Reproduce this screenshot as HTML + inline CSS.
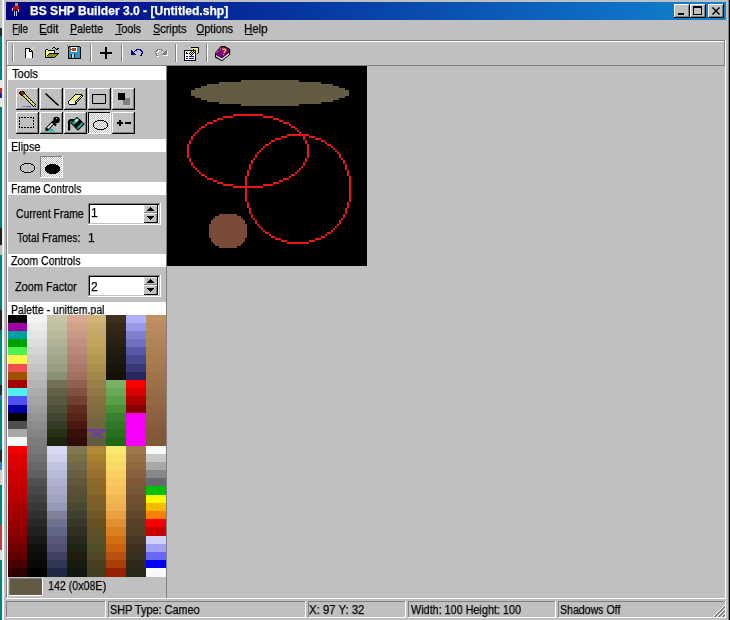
<!DOCTYPE html><html><head><meta charset="utf-8"><style>
html,body{margin:0;padding:0;}
body{width:730px;height:620px;position:relative;overflow:hidden;background:#c0c0c0;font-family:"Liberation Sans",sans-serif;}
.a{position:absolute;}
.t{position:absolute;white-space:pre;line-height:16px;-webkit-font-smoothing:antialiased;will-change:transform;-webkit-text-stroke:0.25px currentColor;font-family:"Liberation Sans",sans-serif;}
u{text-decoration:none;border-bottom:1px solid #000;}
</style></head><body>
<div class="a" style="left:0px;top:0px;width:2px;height:28px;background:#c8c0c0;"></div>
<div class="a" style="left:0px;top:28px;width:2px;height:8px;background:#203030;"></div>
<div class="a" style="left:0px;top:36px;width:2px;height:44px;background:#008080;"></div>
<div class="a" style="left:0px;top:80px;width:2px;height:8px;background:#e8e8e8;"></div>
<div class="a" style="left:0px;top:88px;width:2px;height:5px;background:#d02020;"></div>
<div class="a" style="left:0px;top:93px;width:2px;height:5px;background:#2020c0;"></div>
<div class="a" style="left:0px;top:98px;width:2px;height:9px;background:#e8e8e8;"></div>
<div class="a" style="left:0px;top:107px;width:2px;height:121px;background:#008080;"></div>
<div class="a" style="left:0px;top:228px;width:2px;height:17px;background:#202020;"></div>
<div class="a" style="left:0px;top:245px;width:2px;height:10px;background:#c0c0c0;"></div>
<div class="a" style="left:0px;top:255px;width:2px;height:55px;background:#008080;"></div>
<div class="a" style="left:0px;top:310px;width:2px;height:20px;background:#302020;"></div>
<div class="a" style="left:0px;top:330px;width:2px;height:55px;background:#008080;"></div>
<div class="a" style="left:0px;top:385px;width:2px;height:10px;background:#203030;"></div>
<div class="a" style="left:0px;top:395px;width:2px;height:5px;background:#3070d0;"></div>
<div class="a" style="left:0px;top:400px;width:2px;height:50px;background:#008080;"></div>
<div class="a" style="left:0px;top:450px;width:2px;height:12px;background:#203030;"></div>
<div class="a" style="left:0px;top:462px;width:2px;height:8px;background:#3080d0;"></div>
<div class="a" style="left:0px;top:470px;width:2px;height:15px;background:#d0d0d0;"></div>
<div class="a" style="left:0px;top:485px;width:2px;height:40px;background:#008080;"></div>
<div class="a" style="left:0px;top:525px;width:2px;height:25px;background:#c04040;"></div>
<div class="a" style="left:0px;top:550px;width:2px;height:10px;background:#e0e0e0;"></div>
<div class="a" style="left:0px;top:560px;width:2px;height:60px;background:#008080;"></div>
<div class="a" style="left:2px;top:0px;width:1px;height:620px;background:#e0ecec;"></div>
<div class="a" style="left:3px;top:0px;width:1px;height:620px;background:#fff;"></div>
<div class="a" style="left:727px;top:0px;width:1px;height:620px;background:#c0c0c0;"></div>
<div class="a" style="left:728px;top:0px;width:1px;height:620px;background:#808080;"></div>
<div class="a" style="left:729px;top:0px;width:1px;height:620px;background:#000;"></div>
<div class="a" style="left:6px;top:2px;width:720px;height:18px;background:linear-gradient(to right,#000080,#1084d0);"></div>
<div class="a" style="left:15px;top:3px;width:3px;height:3px;background:#e08030;"></div>
<div class="a" style="left:13px;top:6px;width:6px;height:4px;background:#b01010;"></div>
<div class="a" style="left:12px;top:8px;width:1px;height:3px;background:#f0b0b0;"></div>
<div class="a" style="left:18px;top:9px;width:1px;height:3px;background:#f0b0b0;"></div>
<div class="a" style="left:14px;top:11px;width:1px;height:5px;background:#c0c8f0;"></div>
<div class="a" style="left:16px;top:11px;width:1px;height:5px;background:#c0c8f0;"></div>
<div class="t" style="left:30px;top:3px;font-size:12px;font-weight:700;color:#fff;transform:scaleX(1.0052);transform-origin:0 0;">BS SHP Builder 3.0 - [Untitled.shp]</div>
<div class="a" style="left:674px;top:4px;width:16px;height:14px;background:#000;"></div>
<div class="a" style="left:674px;top:4px;width:15px;height:13px;background:#fff;"></div>
<div class="a" style="left:675px;top:5px;width:14px;height:12px;background:#808080;"></div>
<div class="a" style="left:675px;top:5px;width:13px;height:11px;background:#c0c0c0;"></div>
<div class="a" style="left:690px;top:4px;width:16px;height:14px;background:#000;"></div>
<div class="a" style="left:690px;top:4px;width:15px;height:13px;background:#fff;"></div>
<div class="a" style="left:691px;top:5px;width:14px;height:12px;background:#808080;"></div>
<div class="a" style="left:691px;top:5px;width:13px;height:11px;background:#c0c0c0;"></div>
<div class="a" style="left:708px;top:4px;width:16px;height:14px;background:#000;"></div>
<div class="a" style="left:708px;top:4px;width:15px;height:13px;background:#fff;"></div>
<div class="a" style="left:709px;top:5px;width:14px;height:12px;background:#808080;"></div>
<div class="a" style="left:709px;top:5px;width:13px;height:11px;background:#c0c0c0;"></div>
<div class="a" style="left:678px;top:13px;width:6px;height:2px;background:#000;"></div>
<div class="a" style="left:693px;top:6px;width:9px;height:9px;background:#000;"></div>
<div class="a" style="left:694px;top:8px;width:7px;height:6px;background:#c0c0c0;"></div>
<svg class="a" style="left:708px;top:4px" width="16" height="14"><path d="M4.5 3.5L11.5 10.5M11.5 3.5L4.5 10.5" stroke="#000" stroke-width="1.6"/></svg>
<div class="t" style="left:12px;top:21px;font-size:12px;font-weight:400;color:#000;transform:scaleX(0.8235);transform-origin:0 0;">File</div>
<div class="t" style="left:39px;top:21px;font-size:12px;font-weight:400;color:#000;transform:scaleX(0.9444);transform-origin:0 0;">Edit</div>
<div class="t" style="left:70px;top:21px;font-size:12px;font-weight:400;color:#000;transform:scaleX(0.8857);transform-origin:0 0;">Palette</div>
<div class="t" style="left:116px;top:21px;font-size:12px;font-weight:400;color:#000;transform:scaleX(0.8889);transform-origin:0 0;">Tools</div>
<div class="t" style="left:153px;top:21px;font-size:12px;font-weight:400;color:#000;transform:scaleX(0.9118);transform-origin:0 0;">Scripts</div>
<div class="t" style="left:196px;top:21px;font-size:12px;font-weight:400;color:#000;transform:scaleX(0.8974);transform-origin:0 0;">Options</div>
<div class="t" style="left:244px;top:21px;font-size:12px;font-weight:400;color:#000;transform:scaleX(0.9545);transform-origin:0 0;">Help</div>
<div class="a" style="left:13px;top:34px;width:6px;height:1px;background:#000;"></div>
<div class="a" style="left:40px;top:34px;width:7px;height:1px;background:#000;"></div>
<div class="a" style="left:70px;top:34px;width:7px;height:1px;background:#000;"></div>
<div class="a" style="left:115px;top:34px;width:7px;height:1px;background:#000;"></div>
<div class="a" style="left:153px;top:34px;width:7px;height:1px;background:#000;"></div>
<div class="a" style="left:197px;top:34px;width:7px;height:1px;background:#000;"></div>
<div class="a" style="left:245px;top:34px;width:8px;height:1px;background:#000;"></div>
<div class="a" style="left:6px;top:40px;width:720px;height:1px;background:#808080;"></div>
<div class="a" style="left:6px;top:40px;width:1px;height:559px;background:#808080;"></div>
<div class="a" style="left:6px;top:598px;width:720px;height:1px;background:#fff;"></div>
<div class="a" style="left:725px;top:40px;width:1px;height:559px;background:#fff;"></div>
<div class="a" style="left:7px;top:41px;width:718px;height:1px;background:#fff;"></div>
<div class="a" style="left:7px;top:41px;width:1px;height:25px;background:#fff;"></div>
<div class="a" style="left:7px;top:65px;width:718px;height:1px;background:#808080;"></div>
<div class="a" style="left:724px;top:41px;width:1px;height:25px;background:#808080;"></div>
<div class="a" style="left:12px;top:44px;width:1px;height:18px;background:#808080;"></div>
<div class="a" style="left:13px;top:44px;width:1px;height:18px;background:#fff;"></div>
<div class="a" style="left:90px;top:44px;width:1px;height:18px;background:#808080;"></div>
<div class="a" style="left:91px;top:44px;width:1px;height:18px;background:#fff;"></div>
<div class="a" style="left:121px;top:44px;width:1px;height:18px;background:#808080;"></div>
<div class="a" style="left:122px;top:44px;width:1px;height:18px;background:#fff;"></div>
<div class="a" style="left:175px;top:44px;width:1px;height:18px;background:#808080;"></div>
<div class="a" style="left:176px;top:44px;width:1px;height:18px;background:#fff;"></div>
<div class="a" style="left:206px;top:44px;width:1px;height:18px;background:#808080;"></div>
<div class="a" style="left:207px;top:44px;width:1px;height:18px;background:#fff;"></div>
<svg class="a" style="left:20px;top:44px" width="20" height="18" shape-rendering="crispEdges">
<g fill="#e8e880" opacity="0.6"><rect x="4" y="9" width="1" height="2"/><rect x="9" y="14" width="2" height="1"/><rect x="12" y="3" width="2" height="2"/><rect x="14" y="8" width="1" height="1"/><rect x="3" y="14" width="1" height="1"/></g>
<path d="M5 4h5v1h1v1h1v1h1v7h-8z" fill="#000"/>
<path d="M6 5h3v3h3v6h-6z" fill="#fff"/>
<rect x="10" y="6" width="1" height="1" fill="#fff"/>
</svg>
<svg class="a" style="left:43px;top:44px" width="18" height="16" shape-rendering="crispEdges"><rect x="3" y="6" width="1" height="1" fill="#ffff80"/><rect x="3" y="7" width="1" height="1" fill="#ffff80"/><rect x="3" y="8" width="1" height="1" fill="#ffff80"/><rect x="3" y="9" width="1" height="1" fill="#ffff80"/><rect x="3" y="10" width="1" height="1" fill="#ffff80"/><rect x="3" y="11" width="1" height="1" fill="#ffff80"/><rect x="3" y="12" width="1" height="1" fill="#ffff80"/><rect x="4" y="6" width="1" height="1" fill="#ffff80"/><rect x="4" y="7" width="1" height="1" fill="#ffff80"/><rect x="4" y="8" width="1" height="1" fill="#ffff80"/><rect x="4" y="9" width="1" height="1" fill="#ffff80"/><rect x="4" y="10" width="1" height="1" fill="#ffff80"/><rect x="4" y="11" width="1" height="1" fill="#ffff80"/><rect x="4" y="12" width="1" height="1" fill="#ffff80"/><rect x="5" y="6" width="1" height="1" fill="#ffff80"/><rect x="5" y="7" width="1" height="1" fill="#ffff80"/><rect x="5" y="8" width="1" height="1" fill="#ffff80"/><rect x="5" y="9" width="1" height="1" fill="#ffff80"/><rect x="5" y="10" width="1" height="1" fill="#ffff80"/><rect x="5" y="11" width="1" height="1" fill="#ffff80"/><rect x="5" y="12" width="1" height="1" fill="#ffff80"/><rect x="6" y="6" width="1" height="1" fill="#ffff80"/><rect x="6" y="7" width="1" height="1" fill="#ffff80"/><rect x="6" y="8" width="1" height="1" fill="#ffff80"/><rect x="6" y="9" width="1" height="1" fill="#ffff80"/><rect x="6" y="10" width="1" height="1" fill="#ffff80"/><rect x="6" y="11" width="1" height="1" fill="#ffff80"/><rect x="6" y="12" width="1" height="1" fill="#ffff80"/><rect x="7" y="6" width="1" height="1" fill="#ffff80"/><rect x="7" y="7" width="1" height="1" fill="#ffff80"/><rect x="7" y="8" width="1" height="1" fill="#ffff80"/><rect x="7" y="9" width="1" height="1" fill="#ffff80"/><rect x="7" y="10" width="1" height="1" fill="#ffff80"/><rect x="7" y="11" width="1" height="1" fill="#ffff80"/><rect x="7" y="12" width="1" height="1" fill="#ffff80"/><rect x="8" y="6" width="1" height="1" fill="#ffff80"/><rect x="8" y="7" width="1" height="1" fill="#ffff80"/><rect x="8" y="8" width="1" height="1" fill="#ffff80"/><rect x="8" y="9" width="1" height="1" fill="#ffff80"/><rect x="8" y="10" width="1" height="1" fill="#ffff80"/><rect x="8" y="11" width="1" height="1" fill="#ffff80"/><rect x="8" y="12" width="1" height="1" fill="#ffff80"/><rect x="9" y="6" width="1" height="1" fill="#ffff80"/><rect x="9" y="7" width="1" height="1" fill="#ffff80"/><rect x="9" y="8" width="1" height="1" fill="#ffff80"/><rect x="9" y="9" width="1" height="1" fill="#ffff80"/><rect x="9" y="10" width="1" height="1" fill="#ffff80"/><rect x="9" y="11" width="1" height="1" fill="#ffff80"/><rect x="9" y="12" width="1" height="1" fill="#ffff80"/><rect x="10" y="6" width="1" height="1" fill="#ffff80"/><rect x="10" y="7" width="1" height="1" fill="#ffff80"/><rect x="10" y="8" width="1" height="1" fill="#ffff80"/><rect x="10" y="9" width="1" height="1" fill="#ffff80"/><rect x="10" y="10" width="1" height="1" fill="#ffff80"/><rect x="10" y="11" width="1" height="1" fill="#ffff80"/><rect x="10" y="12" width="1" height="1" fill="#ffff80"/><rect x="6" y="10" width="1" height="1" fill="#909010"/><rect x="7" y="10" width="1" height="1" fill="#909010"/><rect x="8" y="10" width="1" height="1" fill="#909010"/><rect x="9" y="10" width="1" height="1" fill="#909010"/><rect x="10" y="10" width="1" height="1" fill="#909010"/><rect x="11" y="10" width="1" height="1" fill="#909010"/><rect x="12" y="10" width="1" height="1" fill="#909010"/><rect x="13" y="10" width="1" height="1" fill="#909010"/><rect x="14" y="10" width="1" height="1" fill="#909010"/><rect x="5" y="11" width="1" height="1" fill="#909010"/><rect x="6" y="11" width="1" height="1" fill="#909010"/><rect x="7" y="11" width="1" height="1" fill="#909010"/><rect x="8" y="11" width="1" height="1" fill="#909010"/><rect x="9" y="11" width="1" height="1" fill="#909010"/><rect x="10" y="11" width="1" height="1" fill="#909010"/><rect x="11" y="11" width="1" height="1" fill="#909010"/><rect x="12" y="11" width="1" height="1" fill="#909010"/><rect x="13" y="11" width="1" height="1" fill="#909010"/><rect x="4" y="12" width="1" height="1" fill="#909010"/><rect x="5" y="12" width="1" height="1" fill="#909010"/><rect x="6" y="12" width="1" height="1" fill="#909010"/><rect x="7" y="12" width="1" height="1" fill="#909010"/><rect x="8" y="12" width="1" height="1" fill="#909010"/><rect x="9" y="12" width="1" height="1" fill="#909010"/><rect x="10" y="12" width="1" height="1" fill="#909010"/><rect x="11" y="12" width="1" height="1" fill="#909010"/><rect x="12" y="12" width="1" height="1" fill="#909010"/><rect x="2" y="6" width="1" height="1" fill="#000"/><rect x="2" y="7" width="1" height="1" fill="#000"/><rect x="2" y="8" width="1" height="1" fill="#000"/><rect x="2" y="9" width="1" height="1" fill="#000"/><rect x="2" y="10" width="1" height="1" fill="#000"/><rect x="2" y="11" width="1" height="1" fill="#000"/><rect x="2" y="12" width="1" height="1" fill="#000"/><rect x="2" y="13" width="1" height="1" fill="#000"/><rect x="3" y="5" width="1" height="1" fill="#000"/><rect x="4" y="5" width="1" height="1" fill="#000"/><rect x="5" y="6" width="1" height="1" fill="#000"/><rect x="6" y="6" width="1" height="1" fill="#000"/><rect x="7" y="6" width="1" height="1" fill="#000"/><rect x="8" y="6" width="1" height="1" fill="#000"/><rect x="9" y="6" width="1" height="1" fill="#000"/><rect x="10" y="6" width="1" height="1" fill="#000"/><rect x="11" y="6" width="1" height="1" fill="#000"/><rect x="11" y="6" width="1" height="1" fill="#000"/><rect x="11" y="7" width="1" height="1" fill="#000"/><rect x="11" y="8" width="1" height="1" fill="#000"/><rect x="11" y="9" width="1" height="1" fill="#000"/><rect x="2" y="13" width="1" height="1" fill="#000"/><rect x="3" y="13" width="1" height="1" fill="#000"/><rect x="4" y="13" width="1" height="1" fill="#000"/><rect x="5" y="13" width="1" height="1" fill="#000"/><rect x="6" y="13" width="1" height="1" fill="#000"/><rect x="7" y="13" width="1" height="1" fill="#000"/><rect x="8" y="13" width="1" height="1" fill="#000"/><rect x="9" y="13" width="1" height="1" fill="#000"/><rect x="10" y="13" width="1" height="1" fill="#000"/><rect x="11" y="13" width="1" height="1" fill="#000"/><rect x="6" y="9" width="1" height="1" fill="#000"/><rect x="7" y="9" width="1" height="1" fill="#000"/><rect x="8" y="9" width="1" height="1" fill="#000"/><rect x="9" y="9" width="1" height="1" fill="#000"/><rect x="10" y="9" width="1" height="1" fill="#000"/><rect x="11" y="9" width="1" height="1" fill="#000"/><rect x="12" y="9" width="1" height="1" fill="#000"/><rect x="13" y="9" width="1" height="1" fill="#000"/><rect x="14" y="9" width="1" height="1" fill="#000"/><rect x="15" y="9" width="1" height="1" fill="#000"/><rect x="5" y="10" width="1" height="1" fill="#000"/><rect x="4" y="11" width="1" height="1" fill="#000"/><rect x="15" y="9" width="1" height="1" fill="#000"/><rect x="14" y="10" width="1" height="1" fill="#000"/><rect x="13" y="11" width="1" height="1" fill="#000"/><rect x="12" y="12" width="1" height="1" fill="#000"/><rect x="9" y="4" width="1" height="1" fill="#000"/><rect x="10" y="3" width="1" height="1" fill="#000"/><rect x="11" y="3" width="1" height="1" fill="#000"/><rect x="12" y="4" width="1" height="1" fill="#000"/><rect x="13" y="5" width="1" height="1" fill="#000"/><rect x="14" y="5" width="1" height="1" fill="#000"/><rect x="15" y="4" width="1" height="1" fill="#000"/><rect x="14" y="4" width="1" height="1" fill="#000"/></svg>
<svg class="a" style="left:66px;top:44px" width="16" height="16" shape-rendering="crispEdges">
<path d="M2 2h12v1h1v12h-13z" fill="#000"/>
<rect x="3" y="3" width="11" height="11" fill="#2898c8"/>
<rect x="5" y="3" width="6" height="5" fill="#fff"/>
<rect x="6" y="4" width="4" height="3" fill="#c04010"/>
<rect x="5" y="10" width="1" height="4" fill="#000"/><rect x="8" y="10" width="1" height="4" fill="#000"/>
<rect x="6" y="10" width="2" height="4" fill="#b8d8e4"/>
<path d="M1 1h1v1h1v1h1v1h1v1h1v1h-1v-1h-1v-1h-1v-1h-1v-1h-1z" fill="#a04030"/>
</svg>
<div class="a" style="left:100px;top:52px;width:12px;height:2px;background:#000;"></div>
<div class="a" style="left:105px;top:47px;width:2px;height:12px;background:#000;"></div>
<svg class="a" style="left:0;top:0" width="730" height="620" shape-rendering="crispEdges"><rect x="131" y="50" width="1" height="1" fill="#000080"/><rect x="131" y="51" width="1" height="1" fill="#000080"/><rect x="132" y="51" width="1" height="1" fill="#000080"/><rect x="131" y="52" width="1" height="1" fill="#000080"/><rect x="132" y="52" width="1" height="1" fill="#000080"/><rect x="133" y="52" width="1" height="1" fill="#000080"/><rect x="131" y="53" width="1" height="1" fill="#000080"/><rect x="132" y="53" width="1" height="1" fill="#000080"/><rect x="133" y="53" width="1" height="1" fill="#000080"/><rect x="134" y="53" width="1" height="1" fill="#000080"/><rect x="131" y="54" width="1" height="1" fill="#000080"/><rect x="132" y="54" width="1" height="1" fill="#000080"/><rect x="133" y="54" width="1" height="1" fill="#000080"/><rect x="134" y="54" width="1" height="1" fill="#000080"/><rect x="135" y="54" width="1" height="1" fill="#000080"/><rect x="134" y="51" width="1" height="1" fill="#000080"/><rect x="135" y="50" width="1" height="1" fill="#000080"/><rect x="136" y="50" width="1" height="1" fill="#000080"/><rect x="136" y="49" width="1" height="1" fill="#000080"/><rect x="137" y="49" width="1" height="1" fill="#000080"/><rect x="138" y="49" width="1" height="1" fill="#000080"/><rect x="139" y="49" width="1" height="1" fill="#000080"/><rect x="140" y="49" width="1" height="1" fill="#000080"/><rect x="140" y="50" width="1" height="1" fill="#000080"/><rect x="141" y="50" width="1" height="1" fill="#000080"/><rect x="141" y="51" width="1" height="1" fill="#000080"/><rect x="142" y="51" width="1" height="1" fill="#000080"/><rect x="142" y="52" width="1" height="1" fill="#000080"/><rect x="142" y="53" width="1" height="1" fill="#000080"/><rect x="141" y="53" width="1" height="1" fill="#000080"/><rect x="141" y="54" width="1" height="1" fill="#000080"/><rect x="140" y="55" width="1" height="1" fill="#000080"/><rect x="141" y="55" width="1" height="1" fill="#000080"/></svg>
<svg class="a" style="left:0;top:0" width="730" height="620" shape-rendering="crispEdges"><rect x="167" y="51" width="1" height="1" fill="#fff"/><rect x="167" y="52" width="1" height="1" fill="#fff"/><rect x="166" y="52" width="1" height="1" fill="#fff"/><rect x="167" y="53" width="1" height="1" fill="#fff"/><rect x="166" y="53" width="1" height="1" fill="#fff"/><rect x="165" y="53" width="1" height="1" fill="#fff"/><rect x="167" y="54" width="1" height="1" fill="#fff"/><rect x="166" y="54" width="1" height="1" fill="#fff"/><rect x="165" y="54" width="1" height="1" fill="#fff"/><rect x="164" y="54" width="1" height="1" fill="#fff"/><rect x="167" y="55" width="1" height="1" fill="#fff"/><rect x="166" y="55" width="1" height="1" fill="#fff"/><rect x="165" y="55" width="1" height="1" fill="#fff"/><rect x="164" y="55" width="1" height="1" fill="#fff"/><rect x="163" y="55" width="1" height="1" fill="#fff"/><rect x="164" y="52" width="1" height="1" fill="#fff"/><rect x="163" y="51" width="1" height="1" fill="#fff"/><rect x="162" y="51" width="1" height="1" fill="#fff"/><rect x="162" y="50" width="1" height="1" fill="#fff"/><rect x="161" y="50" width="1" height="1" fill="#fff"/><rect x="160" y="50" width="1" height="1" fill="#fff"/><rect x="159" y="50" width="1" height="1" fill="#fff"/><rect x="158" y="50" width="1" height="1" fill="#fff"/><rect x="158" y="51" width="1" height="1" fill="#fff"/><rect x="157" y="51" width="1" height="1" fill="#fff"/><rect x="157" y="52" width="1" height="1" fill="#fff"/><rect x="156" y="52" width="1" height="1" fill="#fff"/><rect x="156" y="53" width="1" height="1" fill="#fff"/><rect x="156" y="54" width="1" height="1" fill="#fff"/><rect x="157" y="54" width="1" height="1" fill="#fff"/><rect x="157" y="55" width="1" height="1" fill="#fff"/><rect x="158" y="56" width="1" height="1" fill="#fff"/><rect x="157" y="56" width="1" height="1" fill="#fff"/><rect x="166" y="50" width="1" height="1" fill="#808080"/><rect x="166" y="51" width="1" height="1" fill="#808080"/><rect x="165" y="51" width="1" height="1" fill="#808080"/><rect x="166" y="52" width="1" height="1" fill="#808080"/><rect x="165" y="52" width="1" height="1" fill="#808080"/><rect x="164" y="52" width="1" height="1" fill="#808080"/><rect x="166" y="53" width="1" height="1" fill="#808080"/><rect x="165" y="53" width="1" height="1" fill="#808080"/><rect x="164" y="53" width="1" height="1" fill="#808080"/><rect x="163" y="53" width="1" height="1" fill="#808080"/><rect x="166" y="54" width="1" height="1" fill="#808080"/><rect x="165" y="54" width="1" height="1" fill="#808080"/><rect x="164" y="54" width="1" height="1" fill="#808080"/><rect x="163" y="54" width="1" height="1" fill="#808080"/><rect x="162" y="54" width="1" height="1" fill="#808080"/><rect x="163" y="51" width="1" height="1" fill="#808080"/><rect x="162" y="50" width="1" height="1" fill="#808080"/><rect x="161" y="50" width="1" height="1" fill="#808080"/><rect x="161" y="49" width="1" height="1" fill="#808080"/><rect x="160" y="49" width="1" height="1" fill="#808080"/><rect x="159" y="49" width="1" height="1" fill="#808080"/><rect x="158" y="49" width="1" height="1" fill="#808080"/><rect x="157" y="49" width="1" height="1" fill="#808080"/><rect x="157" y="50" width="1" height="1" fill="#808080"/><rect x="156" y="50" width="1" height="1" fill="#808080"/><rect x="156" y="51" width="1" height="1" fill="#808080"/><rect x="155" y="51" width="1" height="1" fill="#808080"/><rect x="155" y="52" width="1" height="1" fill="#808080"/><rect x="155" y="53" width="1" height="1" fill="#808080"/><rect x="156" y="53" width="1" height="1" fill="#808080"/><rect x="156" y="54" width="1" height="1" fill="#808080"/><rect x="157" y="55" width="1" height="1" fill="#808080"/><rect x="156" y="55" width="1" height="1" fill="#808080"/></svg>
<svg class="a" style="left:180px;top:44px" width="20" height="18" shape-rendering="crispEdges"><rect x="5" y="7" width="1" height="1" fill="#fff"/><rect x="5" y="8" width="1" height="1" fill="#fff"/><rect x="5" y="9" width="1" height="1" fill="#fff"/><rect x="5" y="10" width="1" height="1" fill="#fff"/><rect x="5" y="11" width="1" height="1" fill="#fff"/><rect x="5" y="12" width="1" height="1" fill="#fff"/><rect x="5" y="13" width="1" height="1" fill="#fff"/><rect x="5" y="14" width="1" height="1" fill="#fff"/><rect x="5" y="15" width="1" height="1" fill="#fff"/><rect x="6" y="7" width="1" height="1" fill="#fff"/><rect x="6" y="8" width="1" height="1" fill="#fff"/><rect x="6" y="9" width="1" height="1" fill="#fff"/><rect x="6" y="10" width="1" height="1" fill="#fff"/><rect x="6" y="11" width="1" height="1" fill="#fff"/><rect x="6" y="12" width="1" height="1" fill="#fff"/><rect x="6" y="13" width="1" height="1" fill="#fff"/><rect x="6" y="14" width="1" height="1" fill="#fff"/><rect x="6" y="15" width="1" height="1" fill="#fff"/><rect x="7" y="7" width="1" height="1" fill="#fff"/><rect x="7" y="8" width="1" height="1" fill="#fff"/><rect x="7" y="9" width="1" height="1" fill="#fff"/><rect x="7" y="10" width="1" height="1" fill="#fff"/><rect x="7" y="11" width="1" height="1" fill="#fff"/><rect x="7" y="12" width="1" height="1" fill="#fff"/><rect x="7" y="13" width="1" height="1" fill="#fff"/><rect x="7" y="14" width="1" height="1" fill="#fff"/><rect x="7" y="15" width="1" height="1" fill="#fff"/><rect x="8" y="7" width="1" height="1" fill="#fff"/><rect x="8" y="8" width="1" height="1" fill="#fff"/><rect x="8" y="9" width="1" height="1" fill="#fff"/><rect x="8" y="10" width="1" height="1" fill="#fff"/><rect x="8" y="11" width="1" height="1" fill="#fff"/><rect x="8" y="12" width="1" height="1" fill="#fff"/><rect x="8" y="13" width="1" height="1" fill="#fff"/><rect x="8" y="14" width="1" height="1" fill="#fff"/><rect x="8" y="15" width="1" height="1" fill="#fff"/><rect x="9" y="7" width="1" height="1" fill="#fff"/><rect x="9" y="8" width="1" height="1" fill="#fff"/><rect x="9" y="9" width="1" height="1" fill="#fff"/><rect x="9" y="10" width="1" height="1" fill="#fff"/><rect x="9" y="11" width="1" height="1" fill="#fff"/><rect x="9" y="12" width="1" height="1" fill="#fff"/><rect x="9" y="13" width="1" height="1" fill="#fff"/><rect x="9" y="14" width="1" height="1" fill="#fff"/><rect x="9" y="15" width="1" height="1" fill="#fff"/><rect x="10" y="7" width="1" height="1" fill="#fff"/><rect x="10" y="8" width="1" height="1" fill="#fff"/><rect x="10" y="9" width="1" height="1" fill="#fff"/><rect x="10" y="10" width="1" height="1" fill="#fff"/><rect x="10" y="11" width="1" height="1" fill="#fff"/><rect x="10" y="12" width="1" height="1" fill="#fff"/><rect x="10" y="13" width="1" height="1" fill="#fff"/><rect x="10" y="14" width="1" height="1" fill="#fff"/><rect x="10" y="15" width="1" height="1" fill="#fff"/><rect x="11" y="7" width="1" height="1" fill="#fff"/><rect x="11" y="8" width="1" height="1" fill="#fff"/><rect x="11" y="9" width="1" height="1" fill="#fff"/><rect x="11" y="10" width="1" height="1" fill="#fff"/><rect x="11" y="11" width="1" height="1" fill="#fff"/><rect x="11" y="12" width="1" height="1" fill="#fff"/><rect x="11" y="13" width="1" height="1" fill="#fff"/><rect x="11" y="14" width="1" height="1" fill="#fff"/><rect x="11" y="15" width="1" height="1" fill="#fff"/><rect x="12" y="7" width="1" height="1" fill="#fff"/><rect x="12" y="8" width="1" height="1" fill="#fff"/><rect x="12" y="9" width="1" height="1" fill="#fff"/><rect x="12" y="10" width="1" height="1" fill="#fff"/><rect x="12" y="11" width="1" height="1" fill="#fff"/><rect x="12" y="12" width="1" height="1" fill="#fff"/><rect x="12" y="13" width="1" height="1" fill="#fff"/><rect x="12" y="14" width="1" height="1" fill="#fff"/><rect x="12" y="15" width="1" height="1" fill="#fff"/><rect x="13" y="7" width="1" height="1" fill="#fff"/><rect x="13" y="8" width="1" height="1" fill="#fff"/><rect x="13" y="9" width="1" height="1" fill="#fff"/><rect x="13" y="10" width="1" height="1" fill="#fff"/><rect x="13" y="11" width="1" height="1" fill="#fff"/><rect x="13" y="12" width="1" height="1" fill="#fff"/><rect x="13" y="13" width="1" height="1" fill="#fff"/><rect x="13" y="14" width="1" height="1" fill="#fff"/><rect x="13" y="15" width="1" height="1" fill="#fff"/><rect x="14" y="7" width="1" height="1" fill="#fff"/><rect x="14" y="8" width="1" height="1" fill="#fff"/><rect x="14" y="9" width="1" height="1" fill="#fff"/><rect x="14" y="10" width="1" height="1" fill="#fff"/><rect x="14" y="11" width="1" height="1" fill="#fff"/><rect x="14" y="12" width="1" height="1" fill="#fff"/><rect x="14" y="13" width="1" height="1" fill="#fff"/><rect x="14" y="14" width="1" height="1" fill="#fff"/><rect x="14" y="15" width="1" height="1" fill="#fff"/><rect x="6" y="12" width="1" height="1" fill="#0000c0"/><rect x="6" y="14" width="1" height="1" fill="#0000c0"/><rect x="7" y="12" width="1" height="1" fill="#0000c0"/><rect x="7" y="14" width="1" height="1" fill="#0000c0"/><rect x="9" y="12" width="1" height="1" fill="#0000c0"/><rect x="9" y="14" width="1" height="1" fill="#0000c0"/><rect x="10" y="12" width="1" height="1" fill="#0000c0"/><rect x="10" y="14" width="1" height="1" fill="#0000c0"/><rect x="11" y="12" width="1" height="1" fill="#0000c0"/><rect x="11" y="14" width="1" height="1" fill="#0000c0"/><rect x="12" y="12" width="1" height="1" fill="#0000c0"/><rect x="12" y="14" width="1" height="1" fill="#0000c0"/><rect x="13" y="12" width="1" height="1" fill="#0000c0"/><rect x="13" y="14" width="1" height="1" fill="#0000c0"/><rect x="12" y="4" width="1" height="1" fill="#f0f080"/><rect x="12" y="5" width="1" height="1" fill="#f0f080"/><rect x="12" y="6" width="1" height="1" fill="#f0f080"/><rect x="12" y="7" width="1" height="1" fill="#f0f080"/><rect x="12" y="8" width="1" height="1" fill="#f0f080"/><rect x="13" y="4" width="1" height="1" fill="#f0f080"/><rect x="13" y="5" width="1" height="1" fill="#f0f080"/><rect x="13" y="6" width="1" height="1" fill="#f0f080"/><rect x="13" y="7" width="1" height="1" fill="#f0f080"/><rect x="13" y="8" width="1" height="1" fill="#f0f080"/><rect x="14" y="4" width="1" height="1" fill="#f0f080"/><rect x="14" y="5" width="1" height="1" fill="#f0f080"/><rect x="14" y="6" width="1" height="1" fill="#f0f080"/><rect x="14" y="7" width="1" height="1" fill="#f0f080"/><rect x="14" y="8" width="1" height="1" fill="#f0f080"/><rect x="15" y="4" width="1" height="1" fill="#f0f080"/><rect x="15" y="5" width="1" height="1" fill="#f0f080"/><rect x="15" y="6" width="1" height="1" fill="#f0f080"/><rect x="15" y="7" width="1" height="1" fill="#f0f080"/><rect x="15" y="8" width="1" height="1" fill="#f0f080"/><rect x="16" y="4" width="1" height="1" fill="#f0f080"/><rect x="16" y="5" width="1" height="1" fill="#f0f080"/><rect x="16" y="6" width="1" height="1" fill="#f0f080"/><rect x="16" y="7" width="1" height="1" fill="#f0f080"/><rect x="16" y="8" width="1" height="1" fill="#f0f080"/><rect x="17" y="4" width="1" height="1" fill="#f0f080"/><rect x="17" y="5" width="1" height="1" fill="#f0f080"/><rect x="17" y="6" width="1" height="1" fill="#f0f080"/><rect x="17" y="7" width="1" height="1" fill="#f0f080"/><rect x="17" y="8" width="1" height="1" fill="#f0f080"/><rect x="8" y="9" width="1" height="1" fill="#f0f0a0"/><rect x="9" y="8" width="1" height="1" fill="#f0f0a0"/><rect x="9" y="10" width="1" height="1" fill="#f0f0a0"/><rect x="10" y="7" width="1" height="1" fill="#f0f0a0"/><rect x="10" y="9" width="1" height="1" fill="#f0f0a0"/><rect x="10" y="11" width="1" height="1" fill="#f0f0a0"/><rect x="11" y="6" width="1" height="1" fill="#f0f0a0"/><rect x="11" y="8" width="1" height="1" fill="#f0f0a0"/><rect x="11" y="10" width="1" height="1" fill="#f0f0a0"/><rect x="12" y="5" width="1" height="1" fill="#f0f0a0"/><rect x="12" y="7" width="1" height="1" fill="#f0f0a0"/><rect x="12" y="9" width="1" height="1" fill="#f0f0a0"/><rect x="13" y="6" width="1" height="1" fill="#f0f0a0"/><rect x="13" y="8" width="1" height="1" fill="#f0f0a0"/><rect x="14" y="7" width="1" height="1" fill="#f0f0a0"/><rect x="4" y="6" width="1" height="1" fill="#000"/><rect x="4" y="7" width="1" height="1" fill="#000"/><rect x="4" y="8" width="1" height="1" fill="#000"/><rect x="4" y="9" width="1" height="1" fill="#000"/><rect x="4" y="10" width="1" height="1" fill="#000"/><rect x="4" y="11" width="1" height="1" fill="#000"/><rect x="4" y="12" width="1" height="1" fill="#000"/><rect x="4" y="13" width="1" height="1" fill="#000"/><rect x="4" y="14" width="1" height="1" fill="#000"/><rect x="4" y="15" width="1" height="1" fill="#000"/><rect x="4" y="16" width="1" height="1" fill="#000"/><rect x="5" y="6" width="1" height="1" fill="#000"/><rect x="5" y="16" width="1" height="1" fill="#000"/><rect x="6" y="6" width="1" height="1" fill="#000"/><rect x="6" y="16" width="1" height="1" fill="#000"/><rect x="7" y="6" width="1" height="1" fill="#000"/><rect x="7" y="16" width="1" height="1" fill="#000"/><rect x="8" y="6" width="1" height="1" fill="#000"/><rect x="8" y="16" width="1" height="1" fill="#000"/><rect x="9" y="6" width="1" height="1" fill="#000"/><rect x="9" y="16" width="1" height="1" fill="#000"/><rect x="10" y="6" width="1" height="1" fill="#000"/><rect x="10" y="16" width="1" height="1" fill="#000"/><rect x="11" y="6" width="1" height="1" fill="#000"/><rect x="11" y="16" width="1" height="1" fill="#000"/><rect x="12" y="6" width="1" height="1" fill="#000"/><rect x="12" y="16" width="1" height="1" fill="#000"/><rect x="13" y="6" width="1" height="1" fill="#000"/><rect x="13" y="16" width="1" height="1" fill="#000"/><rect x="14" y="6" width="1" height="1" fill="#000"/><rect x="14" y="16" width="1" height="1" fill="#000"/><rect x="15" y="6" width="1" height="1" fill="#000"/><rect x="15" y="7" width="1" height="1" fill="#000"/><rect x="15" y="8" width="1" height="1" fill="#000"/><rect x="15" y="9" width="1" height="1" fill="#000"/><rect x="15" y="10" width="1" height="1" fill="#000"/><rect x="15" y="11" width="1" height="1" fill="#000"/><rect x="15" y="12" width="1" height="1" fill="#000"/><rect x="15" y="13" width="1" height="1" fill="#000"/><rect x="15" y="14" width="1" height="1" fill="#000"/><rect x="15" y="15" width="1" height="1" fill="#000"/><rect x="15" y="16" width="1" height="1" fill="#000"/><rect x="6" y="8" width="1" height="1" fill="#000"/><rect x="6" y="9" width="1" height="1" fill="#000"/><rect x="7" y="9" width="1" height="1" fill="#000"/><rect x="11" y="3" width="1" height="1" fill="#000"/><rect x="12" y="3" width="1" height="1" fill="#000"/><rect x="13" y="3" width="1" height="1" fill="#000"/><rect x="14" y="3" width="1" height="1" fill="#000"/><rect x="15" y="3" width="1" height="1" fill="#000"/><rect x="16" y="3" width="1" height="1" fill="#000"/><rect x="17" y="3" width="1" height="1" fill="#000"/><rect x="18" y="3" width="1" height="1" fill="#000"/><rect x="18" y="4" width="1" height="1" fill="#000"/><rect x="18" y="5" width="1" height="1" fill="#000"/><rect x="18" y="6" width="1" height="1" fill="#000"/><rect x="18" y="7" width="1" height="1" fill="#000"/><rect x="18" y="8" width="1" height="1" fill="#000"/><rect x="17" y="9" width="1" height="1" fill="#000"/><rect x="9" y="9" width="1" height="1" fill="#000"/><rect x="10" y="8" width="1" height="1" fill="#000"/><rect x="10" y="10" width="1" height="1" fill="#000"/><rect x="11" y="7" width="1" height="1" fill="#000"/><rect x="11" y="9" width="1" height="1" fill="#000"/><rect x="11" y="11" width="1" height="1" fill="#000"/><rect x="12" y="6" width="1" height="1" fill="#000"/><rect x="12" y="8" width="1" height="1" fill="#000"/><rect x="12" y="10" width="1" height="1" fill="#000"/><rect x="13" y="5" width="1" height="1" fill="#000"/><rect x="13" y="7" width="1" height="1" fill="#000"/><rect x="13" y="9" width="1" height="1" fill="#000"/><rect x="14" y="6" width="1" height="1" fill="#000"/><rect x="14" y="8" width="1" height="1" fill="#000"/></svg>
<svg class="a" style="left:212px;top:44px" width="20" height="18">
<path d="M9 2L12.5 2L18.2 5L18.2 10.5L10 17.2L3 13.5L3 9z" fill="#000"/>
<path d="M9.6 3L12.2 3L17.2 5.8L17.2 7.5L10 13.8L4 10.5L4 9.3z" fill="#800080"/>
<path d="M4 11L10 14.6L17.2 8.6L17.2 10.2L10 16.2L4 12.6z" fill="#f0e0f0"/>
<path d="M4.2 9.2L10 3.2" stroke="#fff" stroke-width="0.9" stroke-dasharray="1 1"/>
<path d="M10.5 6Q11.5 4.8 13 5.2Q14.3 5.8 13.4 7.2Q12.4 8 12 9" fill="none" stroke="#ffc020" stroke-width="1.5"/>
<rect x="11" y="10" width="1.3" height="1.3" fill="#ff80a0"/>
</svg>
<div class="a" style="left:7px;top:66px;width:1px;height:532px;background:#fff;"></div>
<div class="a" style="left:166px;top:66px;width:1px;height:532px;background:#808080;"></div>
<div class="a" style="left:8px;top:66px;width:158px;height:14px;background:#fff;"></div>
<div class="t" style="left:12px;top:66px;font-size:12px;font-weight:400;color:#000;transform:scaleX(0.9259);transform-origin:0 0;">Tools</div>
<div class="a" style="left:8px;top:139px;width:158px;height:13px;background:#fff;"></div>
<div class="t" style="left:11px;top:139px;font-size:12px;font-weight:400;color:#000;transform:scaleX(0.9);transform-origin:0 0;">Elipse</div>
<div class="a" style="left:8px;top:182px;width:158px;height:13px;background:#fff;"></div>
<div class="t" style="left:11px;top:181px;font-size:12px;font-weight:400;color:#000;transform:scaleX(0.85);transform-origin:0 0;">Frame Controls</div>
<div class="a" style="left:8px;top:254px;width:158px;height:13px;background:#fff;"></div>
<div class="t" style="left:11px;top:253px;font-size:12px;font-weight:400;color:#000;transform:scaleX(0.8831);transform-origin:0 0;">Zoom Controls</div>
<div class="a" style="left:8px;top:302px;width:158px;height:13px;background:#fff;"></div>
<div class="t" style="left:11px;top:302px;font-size:12px;font-weight:400;color:#000;transform:scaleX(0.875);transform-origin:0 0;">Palette - unittem.pal</div>
<div class="a" style="left:16px;top:88px;width:23px;height:22px;background:#000;"></div>
<div class="a" style="left:16px;top:88px;width:22px;height:21px;background:#fff;"></div>
<div class="a" style="left:17px;top:89px;width:21px;height:20px;background:#808080;"></div>
<div class="a" style="left:17px;top:89px;width:20px;height:19px;background:#c0c0c0;"></div>
<div class="a" style="left:40px;top:88px;width:23px;height:22px;background:#000;"></div>
<div class="a" style="left:40px;top:88px;width:22px;height:21px;background:#fff;"></div>
<div class="a" style="left:41px;top:89px;width:21px;height:20px;background:#808080;"></div>
<div class="a" style="left:41px;top:89px;width:20px;height:19px;background:#c0c0c0;"></div>
<div class="a" style="left:64px;top:88px;width:23px;height:22px;background:#000;"></div>
<div class="a" style="left:64px;top:88px;width:22px;height:21px;background:#fff;"></div>
<div class="a" style="left:65px;top:89px;width:21px;height:20px;background:#808080;"></div>
<div class="a" style="left:65px;top:89px;width:20px;height:19px;background:#c0c0c0;"></div>
<div class="a" style="left:88px;top:88px;width:23px;height:22px;background:#000;"></div>
<div class="a" style="left:88px;top:88px;width:22px;height:21px;background:#fff;"></div>
<div class="a" style="left:89px;top:89px;width:21px;height:20px;background:#808080;"></div>
<div class="a" style="left:89px;top:89px;width:20px;height:19px;background:#c0c0c0;"></div>
<div class="a" style="left:112px;top:88px;width:23px;height:22px;background:#000;"></div>
<div class="a" style="left:112px;top:88px;width:22px;height:21px;background:#fff;"></div>
<div class="a" style="left:113px;top:89px;width:21px;height:20px;background:#808080;"></div>
<div class="a" style="left:113px;top:89px;width:20px;height:19px;background:#c0c0c0;"></div>
<div class="a" style="left:16px;top:112px;width:23px;height:22px;background:#000;"></div>
<div class="a" style="left:16px;top:112px;width:22px;height:21px;background:#fff;"></div>
<div class="a" style="left:17px;top:113px;width:21px;height:20px;background:#808080;"></div>
<div class="a" style="left:17px;top:113px;width:20px;height:19px;background:#c0c0c0;"></div>
<div class="a" style="left:40px;top:112px;width:23px;height:22px;background:#000;"></div>
<div class="a" style="left:40px;top:112px;width:22px;height:21px;background:#fff;"></div>
<div class="a" style="left:41px;top:113px;width:21px;height:20px;background:#808080;"></div>
<div class="a" style="left:41px;top:113px;width:20px;height:19px;background:#c0c0c0;"></div>
<div class="a" style="left:64px;top:112px;width:23px;height:22px;background:#000;"></div>
<div class="a" style="left:64px;top:112px;width:22px;height:21px;background:#fff;"></div>
<div class="a" style="left:65px;top:113px;width:21px;height:20px;background:#808080;"></div>
<div class="a" style="left:65px;top:113px;width:20px;height:19px;background:#c0c0c0;"></div>
<div class="a" style="left:88px;top:112px;width:23px;height:22px;background:#fff;"></div>
<div class="a" style="left:88px;top:112px;width:22px;height:21px;background:#000;"></div>
<div class="a" style="left:89px;top:113px;width:21px;height:20px;background:#e8e8e8;"></div>
<div class="a" style="left:90px;top:114px;width:20px;height:19px;background-color:#fff;background-image:linear-gradient(45deg,#c0c0c0 25%,transparent 25%,transparent 75%,#c0c0c0 75%),linear-gradient(45deg,#c0c0c0 25%,transparent 25%,transparent 75%,#c0c0c0 75%);background-size:2px 2px;background-position:0 0,1px 1px;"></div>
<div class="a" style="left:112px;top:112px;width:23px;height:22px;background:#000;"></div>
<div class="a" style="left:112px;top:112px;width:22px;height:21px;background:#fff;"></div>
<div class="a" style="left:113px;top:113px;width:21px;height:20px;background:#808080;"></div>
<div class="a" style="left:113px;top:113px;width:20px;height:19px;background:#c0c0c0;"></div>
<svg class="a" style="left:16px;top:88px" width="23" height="22" shape-rendering="crispEdges"><rect x="7" y="5" width="1" height="1" fill="#e8e850"/><rect x="7" y="7" width="1" height="1" fill="#e8e850"/><rect x="7" y="6" width="1" height="1" fill="#e8e850"/><rect x="8" y="7" width="1" height="1" fill="#e8e850"/><rect x="9" y="7" width="1" height="1" fill="#e8e850"/><rect x="9" y="9" width="1" height="1" fill="#e8e850"/><rect x="9" y="8" width="1" height="1" fill="#e8e850"/><rect x="10" y="9" width="1" height="1" fill="#e8e850"/><rect x="11" y="9" width="1" height="1" fill="#e8e850"/><rect x="11" y="11" width="1" height="1" fill="#e8e850"/><rect x="11" y="10" width="1" height="1" fill="#e8e850"/><rect x="12" y="11" width="1" height="1" fill="#e8e850"/><rect x="13" y="11" width="1" height="1" fill="#e8e850"/><rect x="13" y="13" width="1" height="1" fill="#e8e850"/><rect x="13" y="12" width="1" height="1" fill="#e8e850"/><rect x="14" y="13" width="1" height="1" fill="#e8e850"/><rect x="15" y="13" width="1" height="1" fill="#e8e850"/><rect x="15" y="15" width="1" height="1" fill="#e8e850"/><rect x="15" y="14" width="1" height="1" fill="#e8e850"/><rect x="16" y="15" width="1" height="1" fill="#e8e850"/><rect x="17" y="15" width="1" height="1" fill="#e8e850"/><rect x="17" y="17" width="1" height="1" fill="#e8e850"/><rect x="17" y="16" width="1" height="1" fill="#e8e850"/><rect x="8" y="6" width="1" height="1" fill="#a0a020"/><rect x="8" y="8" width="1" height="1" fill="#a0a020"/><rect x="10" y="8" width="1" height="1" fill="#a0a020"/><rect x="10" y="10" width="1" height="1" fill="#a0a020"/><rect x="12" y="10" width="1" height="1" fill="#a0a020"/><rect x="12" y="12" width="1" height="1" fill="#a0a020"/><rect x="14" y="12" width="1" height="1" fill="#a0a020"/><rect x="14" y="14" width="1" height="1" fill="#a0a020"/><rect x="16" y="14" width="1" height="1" fill="#a0a020"/><rect x="16" y="16" width="1" height="1" fill="#a0a020"/><rect x="5" y="3" width="1" height="1" fill="#b02020"/><rect x="6" y="3" width="1" height="1" fill="#b02020"/><rect x="4" y="4" width="1" height="1" fill="#b02020"/><rect x="5" y="4" width="1" height="1" fill="#b02020"/><rect x="6" y="4" width="1" height="1" fill="#b02020"/><rect x="7" y="4" width="1" height="1" fill="#b02020"/><rect x="4" y="5" width="1" height="1" fill="#b02020"/><rect x="5" y="5" width="1" height="1" fill="#b02020"/><rect x="6" y="5" width="1" height="1" fill="#b02020"/><rect x="7" y="5" width="1" height="1" fill="#b02020"/><rect x="8" y="5" width="1" height="1" fill="#b02020"/><rect x="5" y="6" width="1" height="1" fill="#b02020"/><rect x="6" y="6" width="1" height="1" fill="#b02020"/><rect x="7" y="6" width="1" height="1" fill="#b02020"/><rect x="17" y="16" width="1" height="1" fill="#e0e0e0"/><rect x="16" y="17" width="1" height="1" fill="#e0e0e0"/><rect x="17" y="17" width="1" height="1" fill="#e0e0e0"/><rect x="18" y="16" width="1" height="1" fill="#e0e0e0"/><rect x="6" y="3" width="1" height="1" fill="#000"/><rect x="7" y="4" width="1" height="1" fill="#000"/><rect x="8" y="5" width="1" height="1" fill="#000"/><rect x="9" y="6" width="1" height="1" fill="#000"/><rect x="10" y="7" width="1" height="1" fill="#000"/><rect x="11" y="8" width="1" height="1" fill="#000"/><rect x="12" y="9" width="1" height="1" fill="#000"/><rect x="13" y="10" width="1" height="1" fill="#000"/><rect x="14" y="11" width="1" height="1" fill="#000"/><rect x="15" y="12" width="1" height="1" fill="#000"/><rect x="16" y="13" width="1" height="1" fill="#000"/><rect x="17" y="14" width="1" height="1" fill="#000"/><rect x="18" y="15" width="1" height="1" fill="#000"/><rect x="19" y="16" width="1" height="1" fill="#000"/><rect x="4" y="5" width="1" height="1" fill="#000"/><rect x="5" y="6" width="1" height="1" fill="#000"/><rect x="6" y="7" width="1" height="1" fill="#000"/><rect x="7" y="8" width="1" height="1" fill="#000"/><rect x="8" y="9" width="1" height="1" fill="#000"/><rect x="9" y="10" width="1" height="1" fill="#000"/><rect x="10" y="11" width="1" height="1" fill="#000"/><rect x="11" y="12" width="1" height="1" fill="#000"/><rect x="12" y="13" width="1" height="1" fill="#000"/><rect x="13" y="14" width="1" height="1" fill="#000"/><rect x="14" y="15" width="1" height="1" fill="#000"/><rect x="15" y="16" width="1" height="1" fill="#000"/><rect x="16" y="17" width="1" height="1" fill="#000"/><rect x="17" y="18" width="1" height="1" fill="#000"/><rect x="4" y="3" width="1" height="1" fill="#000"/><rect x="3" y="4" width="1" height="1" fill="#000"/><rect x="3" y="5" width="1" height="1" fill="#000"/><rect x="4" y="6" width="1" height="1" fill="#000"/><rect x="5" y="7" width="1" height="1" fill="#000"/><rect x="7" y="3" width="1" height="1" fill="#000"/><rect x="8" y="4" width="1" height="1" fill="#000"/><rect x="18" y="17" width="1" height="1" fill="#000"/><rect x="19" y="18" width="1" height="1" fill="#000"/><rect x="17" y="18" width="1" height="1" fill="#000"/><rect x="7" y="18" width="1" height="1" fill="#707050"/><rect x="8" y="18" width="1" height="1" fill="#707050"/><rect x="10" y="18" width="1" height="1" fill="#6060b0"/><rect x="11" y="18" width="1" height="1" fill="#6060b0"/><rect x="12" y="18" width="1" height="1" fill="#6060b0"/><rect x="13" y="18" width="1" height="1" fill="#6060b0"/><rect x="14" y="18" width="1" height="1" fill="#6060b0"/></svg>
<svg class="a" style="left:40px;top:88px" width="23" height="22"><path d="M5.5 5.5 L18.5 17.5" stroke="#000" stroke-width="1.7"/></svg>
<svg class="a" style="left:64px;top:88px" width="23" height="22" shape-rendering="crispEdges"><rect x="11" y="7" width="1" height="1" fill="#f0f080"/><rect x="12" y="7" width="1" height="1" fill="#f0f080"/><rect x="13" y="7" width="1" height="1" fill="#f0f080"/><rect x="14" y="7" width="1" height="1" fill="#f0f080"/><rect x="15" y="7" width="1" height="1" fill="#f0f080"/><rect x="16" y="7" width="1" height="1" fill="#f0f080"/><rect x="10" y="8" width="1" height="1" fill="#f0f080"/><rect x="11" y="8" width="1" height="1" fill="#f0f080"/><rect x="12" y="8" width="1" height="1" fill="#f0f080"/><rect x="13" y="8" width="1" height="1" fill="#f0f080"/><rect x="14" y="8" width="1" height="1" fill="#f0f080"/><rect x="15" y="8" width="1" height="1" fill="#f0f080"/><rect x="9" y="9" width="1" height="1" fill="#f0f080"/><rect x="10" y="9" width="1" height="1" fill="#f0f080"/><rect x="11" y="9" width="1" height="1" fill="#f0f080"/><rect x="12" y="9" width="1" height="1" fill="#f0f080"/><rect x="13" y="9" width="1" height="1" fill="#f0f080"/><rect x="14" y="9" width="1" height="1" fill="#f0f080"/><rect x="8" y="10" width="1" height="1" fill="#f0f080"/><rect x="9" y="10" width="1" height="1" fill="#f0f080"/><rect x="10" y="10" width="1" height="1" fill="#f0f080"/><rect x="11" y="10" width="1" height="1" fill="#f0f080"/><rect x="12" y="10" width="1" height="1" fill="#f0f080"/><rect x="13" y="10" width="1" height="1" fill="#f0f080"/><rect x="7" y="11" width="1" height="1" fill="#f0f080"/><rect x="8" y="11" width="1" height="1" fill="#f0f080"/><rect x="9" y="11" width="1" height="1" fill="#f0f080"/><rect x="10" y="11" width="1" height="1" fill="#f0f080"/><rect x="11" y="11" width="1" height="1" fill="#f0f080"/><rect x="12" y="11" width="1" height="1" fill="#f0f080"/><rect x="6" y="12" width="1" height="1" fill="#f0f080"/><rect x="7" y="12" width="1" height="1" fill="#f0f080"/><rect x="8" y="12" width="1" height="1" fill="#f0f080"/><rect x="9" y="12" width="1" height="1" fill="#f0f080"/><rect x="10" y="12" width="1" height="1" fill="#f0f080"/><rect x="11" y="12" width="1" height="1" fill="#f0f080"/><rect x="17" y="8" width="1" height="1" fill="#d8d840"/><rect x="16" y="9" width="1" height="1" fill="#d8d840"/><rect x="15" y="10" width="1" height="1" fill="#d8d840"/><rect x="14" y="11" width="1" height="1" fill="#d8d840"/><rect x="13" y="12" width="1" height="1" fill="#d8d840"/><rect x="12" y="13" width="1" height="1" fill="#d8d840"/><rect x="10" y="15" width="1" height="1" fill="#d8d840"/><rect x="5" y="13" width="1" height="1" fill="#f0f0b0"/><rect x="6" y="13" width="1" height="1" fill="#f0f0b0"/><rect x="7" y="13" width="1" height="1" fill="#f0f0b0"/><rect x="8" y="13" width="1" height="1" fill="#f0f0b0"/><rect x="9" y="13" width="1" height="1" fill="#f0f0b0"/><rect x="10" y="13" width="1" height="1" fill="#f0f0b0"/><rect x="5" y="14" width="1" height="1" fill="#f4f4f0"/><rect x="5" y="15" width="1" height="1" fill="#f4f4f0"/><rect x="6" y="14" width="1" height="1" fill="#f4f4f0"/><rect x="6" y="15" width="1" height="1" fill="#f4f4f0"/><rect x="7" y="14" width="1" height="1" fill="#f4f4f0"/><rect x="7" y="15" width="1" height="1" fill="#f4f4f0"/><rect x="8" y="14" width="1" height="1" fill="#f4f4f0"/><rect x="8" y="15" width="1" height="1" fill="#f4f4f0"/><rect x="9" y="14" width="1" height="1" fill="#f4f4f0"/><rect x="9" y="15" width="1" height="1" fill="#f4f4f0"/><rect x="10" y="14" width="1" height="1" fill="#f4f4f0"/><rect x="10" y="15" width="1" height="1" fill="#f4f4f0"/><rect x="4" y="13" width="1" height="1" fill="#000"/><rect x="4" y="14" width="1" height="1" fill="#000"/><rect x="4" y="15" width="1" height="1" fill="#000"/><rect x="5" y="12" width="1" height="1" fill="#000"/><rect x="5" y="16" width="1" height="1" fill="#000"/><rect x="6" y="11" width="1" height="1" fill="#000"/><rect x="6" y="16" width="1" height="1" fill="#000"/><rect x="7" y="10" width="1" height="1" fill="#000"/><rect x="7" y="16" width="1" height="1" fill="#000"/><rect x="8" y="9" width="1" height="1" fill="#000"/><rect x="8" y="16" width="1" height="1" fill="#000"/><rect x="9" y="8" width="1" height="1" fill="#000"/><rect x="9" y="16" width="1" height="1" fill="#000"/><rect x="10" y="7" width="1" height="1" fill="#000"/><rect x="10" y="16" width="1" height="1" fill="#000"/><rect x="11" y="6" width="1" height="1" fill="#000"/><rect x="11" y="13" width="1" height="1" fill="#000"/><rect x="11" y="14" width="1" height="1" fill="#000"/><rect x="11" y="15" width="1" height="1" fill="#000"/><rect x="11" y="16" width="1" height="1" fill="#000"/><rect x="12" y="6" width="1" height="1" fill="#000"/><rect x="12" y="12" width="1" height="1" fill="#000"/><rect x="12" y="14" width="1" height="1" fill="#000"/><rect x="12" y="15" width="1" height="1" fill="#000"/><rect x="13" y="6" width="1" height="1" fill="#000"/><rect x="13" y="11" width="1" height="1" fill="#000"/><rect x="13" y="13" width="1" height="1" fill="#000"/><rect x="14" y="6" width="1" height="1" fill="#000"/><rect x="14" y="10" width="1" height="1" fill="#000"/><rect x="14" y="12" width="1" height="1" fill="#000"/><rect x="15" y="6" width="1" height="1" fill="#000"/><rect x="15" y="9" width="1" height="1" fill="#000"/><rect x="15" y="11" width="1" height="1" fill="#000"/><rect x="16" y="6" width="1" height="1" fill="#000"/><rect x="16" y="8" width="1" height="1" fill="#000"/><rect x="16" y="10" width="1" height="1" fill="#000"/><rect x="17" y="6" width="1" height="1" fill="#000"/><rect x="17" y="7" width="1" height="1" fill="#000"/><rect x="17" y="9" width="1" height="1" fill="#000"/><rect x="18" y="7" width="1" height="1" fill="#000"/><rect x="18" y="8" width="1" height="1" fill="#000"/></svg>
<svg class="a" style="left:88px;top:88px" width="23" height="22" shape-rendering="crispEdges"><rect x="4.5" y="6.5" width="13" height="9" fill="none" stroke="#000" stroke-width="1.6"/></svg>
<div class="a" style="left:123px;top:98px;width:7px;height:7px;background:#808080;"></div>
<div class="a" style="left:118px;top:93px;width:7px;height:7px;background:#000;"></div>
<svg class="a" style="left:0;top:0" width="730" height="620" shape-rendering="crispEdges"><path d="M19 117h1v1h-1zM19 127h1v1h-1zM21 117h2v1h-2zM21 127h2v1h-2zM24 117h2v1h-2zM24 127h2v1h-2zM27 117h2v1h-2zM27 127h2v1h-2zM30 117h2v1h-2zM30 127h2v1h-2zM33 117h1v1h-1zM33 127h1v1h-1zM19 118h1v1h-1zM33 118h1v1h-1zM19 120h1v2h-1zM33 120h1v2h-1zM19 123h1v2h-1zM33 123h1v2h-1zM19 126h1v1h-1zM33 126h1v1h-1z" fill="#000"/></svg>
<svg class="a" style="left:40px;top:112px" width="23" height="22">
<path d="M3.5 19.5L15.5 19.5L12 16.5L6.5 16.5z" fill="#30b0a8"/>
<path d="M7 17 L13.5 10.5" stroke="#000" stroke-width="3.6" stroke-linecap="round"/>
<path d="M7.6 16.4 L13 11" stroke="#fff" stroke-width="1.6"/>
<path d="M12 9.5 L16 13.5" stroke="#000" stroke-width="2.2"/>
<circle cx="16.5" cy="8" r="3.3" fill="#000"/>
<path d="M13 10 L16 7 L18 9 L15 12z" fill="#000"/>
<rect x="16" y="6" width="1" height="1" fill="#e0e0e0"/>
</svg>
<svg class="a" style="left:64px;top:112px" width="23" height="22">
<path d="M13 4.8L20.8 12L14 18.8L6.3 11z" fill="#000"/>
<path d="M13 6.3L19.2 12L14 17.2L7.8 11z" fill="#20b0a0"/>
<path d="M10.5 8.5L13 6.3L15 8.2L12.5 10.5z" fill="#c0f0e8"/>
<path d="M9.8 13L15.8 7.2L18.6 10.2L12.8 16z" fill="#000"/>
<path d="M13.6 15.4L18.6 10.6" stroke="#20b0a0" stroke-width="1.1"/>
<path d="M4 18.5L4 10Q4 7 7.5 7L10 7L10 9L8 9Q6.2 9 6.2 11L6.2 18.5z" fill="#000"/>
</svg>
<svg class="a" style="left:0;top:0" width="730" height="620" shape-rendering="crispEdges"><path d="M97 120h7v1h-7zM95 121h2v1h-2zM104 121h2v1h-2zM94 122h1v1h-1zM106 122h1v1h-1zM93 123h1v1h-1zM107 123h1v1h-1zM93 124h1v1h-1zM107 124h1v1h-1zM93 125h1v1h-1zM107 125h1v1h-1zM93 126h1v1h-1zM107 126h1v1h-1zM94 127h1v1h-1zM106 127h1v1h-1zM95 128h2v1h-2zM104 128h2v1h-2zM97 129h7v1h-7z" fill="#000"/></svg>
<div class="a" style="left:117px;top:122px;width:6px;height:2px;background:#000;"></div>
<div class="a" style="left:119px;top:120px;width:2px;height:6px;background:#000;"></div>
<div class="a" style="left:125px;top:122px;width:6px;height:2px;background:#000;"></div>
<svg class="a" style="left:0;top:0" width="730" height="620" shape-rendering="crispEdges"><path d="M24 163h7v1h-7zM22 164h2v1h-2zM31 164h2v1h-2zM21 165h1v1h-1zM33 165h1v1h-1zM20 166h1v1h-1zM34 166h1v1h-1zM20 167h1v1h-1zM34 167h1v1h-1zM20 168h1v1h-1zM34 168h1v1h-1zM20 169h1v1h-1zM34 169h1v1h-1zM21 170h1v1h-1zM33 170h1v1h-1zM22 171h2v1h-2zM31 171h2v1h-2zM24 172h7v1h-7z" fill="#000"/></svg>
<div class="a" style="left:40px;top:156px;width:23px;height:22px;background:#fff;"></div>
<div class="a" style="left:40px;top:156px;width:22px;height:21px;background:#808080;"></div>
<div class="a" style="left:41px;top:157px;width:21px;height:20px;background-color:#fff;background-image:linear-gradient(45deg,#c0c0c0 25%,transparent 25%,transparent 75%,#c0c0c0 75%),linear-gradient(45deg,#c0c0c0 25%,transparent 25%,transparent 75%,#c0c0c0 75%);background-size:2px 2px;background-position:0 0,1px 1px;"></div>
<svg class="a" style="left:0;top:0" width="730" height="620" shape-rendering="crispEdges"><path d="M49 164h7v1h-7zM47 165h11v1h-11zM46 166h13v1h-13zM45 167h15v1h-15zM45 168h15v1h-15zM45 169h15v1h-15zM45 170h15v1h-15zM46 171h13v1h-13zM47 172h11v1h-11zM49 173h7v1h-7z" fill="#000"/></svg>
<div class="t" style="left:16px;top:206px;font-size:12px;font-weight:400;color:#000;transform:scaleX(0.8667);transform-origin:0 0;">Current Frame</div>
<div class="t" style="left:17px;top:230px;font-size:12px;font-weight:400;color:#000;transform:scaleX(0.8734);transform-origin:0 0;">Total Frames:</div>
<div class="t" style="left:88px;top:230px;font-size:12px;font-weight:400;color:#000;transform:scaleX(1.0);transform-origin:0 0;">1</div>
<div class="a" style="left:88px;top:203px;width:73px;height:22px;background:#fff;"></div>
<div class="a" style="left:88px;top:203px;width:72px;height:21px;background:#808080;"></div>
<div class="a" style="left:89px;top:204px;width:71px;height:20px;background:#c0c0c0;"></div>
<div class="a" style="left:89px;top:204px;width:70px;height:19px;background:#000;"></div>
<div class="a" style="left:90px;top:205px;width:69px;height:18px;background:#fff;"></div>
<div class="t" style="left:91px;top:205px;font-size:12px;font-weight:400;color:#000;transform:scaleX(1.0);transform-origin:0 0;">1</div>
<div class="a" style="left:144px;top:205px;width:14px;height:8px;background:#c0c0c0;"></div>
<div class="a" style="left:144px;top:205px;width:14px;height:1px;background:#dfdfdf;"></div>
<div class="a" style="left:144px;top:205px;width:1px;height:8px;background:#dfdfdf;"></div>
<div class="a" style="left:144px;top:212px;width:14px;height:1px;background:#808080;"></div>
<div class="a" style="left:144px;top:213px;width:14px;height:1px;background:#fff;"></div>
<div class="a" style="left:144px;top:214px;width:14px;height:9px;background:#c0c0c0;"></div>
<div class="a" style="left:144px;top:222px;width:14px;height:1px;background:#000;"></div>
<div class="a" style="left:157px;top:205px;width:1px;height:18px;background:#000;"></div>
<div class="a" style="left:156px;top:214px;width:1px;height:8px;background:#808080;"></div>
<svg class="a" style="left:144px;top:205px" width="14" height="18" shape-rendering="crispEdges"><path d="M3 6h7l-3.5-4z" fill="#000"/><path d="M3 11h7l-3.5 4z" fill="#000"/></svg>
<div class="t" style="left:15px;top:279px;font-size:12px;font-weight:400;color:#000;transform:scaleX(0.9104);transform-origin:0 0;">Zoom Factor</div>
<div class="a" style="left:88px;top:275px;width:73px;height:22px;background:#fff;"></div>
<div class="a" style="left:88px;top:275px;width:72px;height:21px;background:#808080;"></div>
<div class="a" style="left:89px;top:276px;width:71px;height:20px;background:#c0c0c0;"></div>
<div class="a" style="left:89px;top:276px;width:70px;height:19px;background:#000;"></div>
<div class="a" style="left:90px;top:277px;width:69px;height:18px;background:#fff;"></div>
<div class="t" style="left:91px;top:279px;font-size:12px;font-weight:400;color:#000;transform:scaleX(1.0);transform-origin:0 0;">2</div>
<div class="a" style="left:144px;top:277px;width:14px;height:8px;background:#c0c0c0;"></div>
<div class="a" style="left:144px;top:277px;width:14px;height:1px;background:#dfdfdf;"></div>
<div class="a" style="left:144px;top:277px;width:1px;height:8px;background:#dfdfdf;"></div>
<div class="a" style="left:144px;top:284px;width:14px;height:1px;background:#808080;"></div>
<div class="a" style="left:144px;top:285px;width:14px;height:1px;background:#fff;"></div>
<div class="a" style="left:144px;top:286px;width:14px;height:9px;background:#c0c0c0;"></div>
<div class="a" style="left:144px;top:294px;width:14px;height:1px;background:#000;"></div>
<div class="a" style="left:157px;top:277px;width:1px;height:18px;background:#000;"></div>
<div class="a" style="left:156px;top:286px;width:1px;height:8px;background:#808080;"></div>
<svg class="a" style="left:144px;top:277px" width="14" height="18" shape-rendering="crispEdges"><path d="M3 6h7l-3.5-4z" fill="#000"/><path d="M3 11h7l-3.5 4z" fill="#000"/></svg>
<div class="a" style="left:8px;top:315px;width:19px;height:8px;background:#000000;"></div>
<div class="a" style="left:8px;top:323px;width:19px;height:8px;background:#a000a0;"></div>
<div class="a" style="left:8px;top:331px;width:19px;height:8px;background:#00a0a0;"></div>
<div class="a" style="left:8px;top:339px;width:19px;height:8px;background:#00a000;"></div>
<div class="a" style="left:8px;top:347px;width:19px;height:8px;background:#50f050;"></div>
<div class="a" style="left:8px;top:355px;width:19px;height:9px;background:#f8f850;"></div>
<div class="a" style="left:8px;top:364px;width:19px;height:8px;background:#f05050;"></div>
<div class="a" style="left:8px;top:372px;width:19px;height:8px;background:#a05000;"></div>
<div class="a" style="left:8px;top:380px;width:19px;height:8px;background:#a00000;"></div>
<div class="a" style="left:8px;top:388px;width:19px;height:8px;background:#50f0f0;"></div>
<div class="a" style="left:8px;top:396px;width:19px;height:9px;background:#5050f0;"></div>
<div class="a" style="left:8px;top:405px;width:19px;height:8px;background:#0000a0;"></div>
<div class="a" style="left:8px;top:413px;width:19px;height:8px;background:#040404;"></div>
<div class="a" style="left:8px;top:421px;width:19px;height:8px;background:#505050;"></div>
<div class="a" style="left:8px;top:429px;width:19px;height:8px;background:#a8a8a8;"></div>
<div class="a" style="left:8px;top:437px;width:19px;height:9px;background:#f8f8f8;"></div>
<div class="a" style="left:8px;top:446px;width:19px;height:8px;background:#f00000;"></div>
<div class="a" style="left:8px;top:454px;width:19px;height:8px;background:#e00000;"></div>
<div class="a" style="left:8px;top:462px;width:19px;height:8px;background:#d80000;"></div>
<div class="a" style="left:8px;top:470px;width:19px;height:8px;background:#d00000;"></div>
<div class="a" style="left:8px;top:478px;width:19px;height:8px;background:#c80000;"></div>
<div class="a" style="left:8px;top:486px;width:19px;height:9px;background:#c00000;"></div>
<div class="a" style="left:8px;top:495px;width:19px;height:8px;background:#b80000;"></div>
<div class="a" style="left:8px;top:503px;width:19px;height:8px;background:#a80000;"></div>
<div class="a" style="left:8px;top:511px;width:19px;height:8px;background:#a00000;"></div>
<div class="a" style="left:8px;top:519px;width:19px;height:8px;background:#980000;"></div>
<div class="a" style="left:8px;top:527px;width:19px;height:9px;background:#900000;"></div>
<div class="a" style="left:8px;top:536px;width:19px;height:8px;background:#800000;"></div>
<div class="a" style="left:8px;top:544px;width:19px;height:8px;background:#700000;"></div>
<div class="a" style="left:8px;top:552px;width:19px;height:8px;background:#600000;"></div>
<div class="a" style="left:8px;top:560px;width:19px;height:8px;background:#480000;"></div>
<div class="a" style="left:8px;top:568px;width:19px;height:9px;background:#300000;"></div>
<div class="a" style="left:27px;top:315px;width:20px;height:8px;background:#f4f4f4;"></div>
<div class="a" style="left:27px;top:323px;width:20px;height:8px;background:#ececec;"></div>
<div class="a" style="left:27px;top:331px;width:20px;height:8px;background:#e4e4e4;"></div>
<div class="a" style="left:27px;top:339px;width:20px;height:8px;background:#dcdcdc;"></div>
<div class="a" style="left:27px;top:347px;width:20px;height:8px;background:#d4d4d4;"></div>
<div class="a" style="left:27px;top:355px;width:20px;height:9px;background:#cccccc;"></div>
<div class="a" style="left:27px;top:364px;width:20px;height:8px;background:#c4c4c4;"></div>
<div class="a" style="left:27px;top:372px;width:20px;height:8px;background:#bcbcbc;"></div>
<div class="a" style="left:27px;top:380px;width:20px;height:8px;background:#b4b4b4;"></div>
<div class="a" style="left:27px;top:388px;width:20px;height:8px;background:#acacac;"></div>
<div class="a" style="left:27px;top:396px;width:20px;height:9px;background:#a4a4a4;"></div>
<div class="a" style="left:27px;top:405px;width:20px;height:8px;background:#9c9c9c;"></div>
<div class="a" style="left:27px;top:413px;width:20px;height:8px;background:#949494;"></div>
<div class="a" style="left:27px;top:421px;width:20px;height:8px;background:#8c8c8c;"></div>
<div class="a" style="left:27px;top:429px;width:20px;height:8px;background:#848484;"></div>
<div class="a" style="left:27px;top:437px;width:20px;height:9px;background:#7c7c7c;"></div>
<div class="a" style="left:27px;top:446px;width:20px;height:8px;background:#787878;"></div>
<div class="a" style="left:27px;top:454px;width:20px;height:8px;background:#707070;"></div>
<div class="a" style="left:27px;top:462px;width:20px;height:8px;background:#686868;"></div>
<div class="a" style="left:27px;top:470px;width:20px;height:8px;background:#606060;"></div>
<div class="a" style="left:27px;top:478px;width:20px;height:8px;background:#505050;"></div>
<div class="a" style="left:27px;top:486px;width:20px;height:9px;background:#484848;"></div>
<div class="a" style="left:27px;top:495px;width:20px;height:8px;background:#404040;"></div>
<div class="a" style="left:27px;top:503px;width:20px;height:8px;background:#383838;"></div>
<div class="a" style="left:27px;top:511px;width:20px;height:8px;background:#303030;"></div>
<div class="a" style="left:27px;top:519px;width:20px;height:8px;background:#282828;"></div>
<div class="a" style="left:27px;top:527px;width:20px;height:9px;background:#202020;"></div>
<div class="a" style="left:27px;top:536px;width:20px;height:8px;background:#181818;"></div>
<div class="a" style="left:27px;top:544px;width:20px;height:8px;background:#101010;"></div>
<div class="a" style="left:27px;top:552px;width:20px;height:8px;background:#0c0c0c;"></div>
<div class="a" style="left:27px;top:560px;width:20px;height:8px;background:#080808;"></div>
<div class="a" style="left:27px;top:568px;width:20px;height:9px;background:#000000;"></div>
<div class="a" style="left:47px;top:315px;width:20px;height:8px;background:#c8c4a8;"></div>
<div class="a" style="left:47px;top:323px;width:20px;height:8px;background:#c0c0a4;"></div>
<div class="a" style="left:47px;top:331px;width:20px;height:8px;background:#b8b89c;"></div>
<div class="a" style="left:47px;top:339px;width:20px;height:8px;background:#b0b494;"></div>
<div class="a" style="left:47px;top:347px;width:20px;height:8px;background:#a8ac90;"></div>
<div class="a" style="left:47px;top:355px;width:20px;height:9px;background:#a0a488;"></div>
<div class="a" style="left:47px;top:364px;width:20px;height:8px;background:#989c80;"></div>
<div class="a" style="left:47px;top:372px;width:20px;height:8px;background:#889078;"></div>
<div class="a" style="left:47px;top:380px;width:20px;height:8px;background:#747058;"></div>
<div class="a" style="left:47px;top:388px;width:20px;height:8px;background:#646048;"></div>
<div class="a" style="left:47px;top:396px;width:20px;height:9px;background:#585840;"></div>
<div class="a" style="left:47px;top:405px;width:20px;height:8px;background:#4c5038;"></div>
<div class="a" style="left:47px;top:413px;width:20px;height:8px;background:#404430;"></div>
<div class="a" style="left:47px;top:421px;width:20px;height:8px;background:#343c28;"></div>
<div class="a" style="left:47px;top:429px;width:20px;height:8px;background:#283018;"></div>
<div class="a" style="left:47px;top:437px;width:20px;height:9px;background:#1c2410;"></div>
<div class="a" style="left:47px;top:446px;width:20px;height:8px;background:#d8d8f0;"></div>
<div class="a" style="left:47px;top:454px;width:20px;height:8px;background:#d0d0e8;"></div>
<div class="a" style="left:47px;top:462px;width:20px;height:8px;background:#c0c4e0;"></div>
<div class="a" style="left:47px;top:470px;width:20px;height:8px;background:#b8bcd8;"></div>
<div class="a" style="left:47px;top:478px;width:20px;height:8px;background:#b0b0d0;"></div>
<div class="a" style="left:47px;top:486px;width:20px;height:9px;background:#a8a8c8;"></div>
<div class="a" style="left:47px;top:495px;width:20px;height:8px;background:#a0a4c0;"></div>
<div class="a" style="left:47px;top:503px;width:20px;height:8px;background:#9498b8;"></div>
<div class="a" style="left:47px;top:511px;width:20px;height:8px;background:#808098;"></div>
<div class="a" style="left:47px;top:519px;width:20px;height:8px;background:#707090;"></div>
<div class="a" style="left:47px;top:527px;width:20px;height:9px;background:#606888;"></div>
<div class="a" style="left:47px;top:536px;width:20px;height:8px;background:#585878;"></div>
<div class="a" style="left:47px;top:544px;width:20px;height:8px;background:#505070;"></div>
<div class="a" style="left:47px;top:552px;width:20px;height:8px;background:#404060;"></div>
<div class="a" style="left:47px;top:560px;width:20px;height:8px;background:#303858;"></div>
<div class="a" style="left:47px;top:568px;width:20px;height:9px;background:#202848;"></div>
<div class="a" style="left:67px;top:315px;width:20px;height:8px;background:#d8a890;"></div>
<div class="a" style="left:67px;top:323px;width:20px;height:8px;background:#d0a088;"></div>
<div class="a" style="left:67px;top:331px;width:20px;height:8px;background:#c89888;"></div>
<div class="a" style="left:67px;top:339px;width:20px;height:8px;background:#c09080;"></div>
<div class="a" style="left:67px;top:347px;width:20px;height:8px;background:#b88878;"></div>
<div class="a" style="left:67px;top:355px;width:20px;height:9px;background:#b08070;"></div>
<div class="a" style="left:67px;top:364px;width:20px;height:8px;background:#a87868;"></div>
<div class="a" style="left:67px;top:372px;width:20px;height:8px;background:#a07060;"></div>
<div class="a" style="left:67px;top:380px;width:20px;height:8px;background:#906050;"></div>
<div class="a" style="left:67px;top:388px;width:20px;height:8px;background:#805040;"></div>
<div class="a" style="left:67px;top:396px;width:20px;height:9px;background:#704030;"></div>
<div class="a" style="left:67px;top:405px;width:20px;height:8px;background:#602c20;"></div>
<div class="a" style="left:67px;top:413px;width:20px;height:8px;background:#582418;"></div>
<div class="a" style="left:67px;top:421px;width:20px;height:8px;background:#481810;"></div>
<div class="a" style="left:67px;top:429px;width:20px;height:8px;background:#381008;"></div>
<div class="a" style="left:67px;top:437px;width:20px;height:9px;background:#300c08;"></div>
<div class="a" style="left:67px;top:446px;width:20px;height:8px;background:#807850;"></div>
<div class="a" style="left:67px;top:454px;width:20px;height:8px;background:#787048;"></div>
<div class="a" style="left:67px;top:462px;width:20px;height:8px;background:#706848;"></div>
<div class="a" style="left:67px;top:470px;width:20px;height:8px;background:#686040;"></div>
<div class="a" style="left:67px;top:478px;width:20px;height:8px;background:#605838;"></div>
<div class="a" style="left:67px;top:486px;width:20px;height:9px;background:#585038;"></div>
<div class="a" style="left:67px;top:495px;width:20px;height:8px;background:#505030;"></div>
<div class="a" style="left:67px;top:503px;width:20px;height:8px;background:#484830;"></div>
<div class="a" style="left:67px;top:511px;width:20px;height:8px;background:#404030;"></div>
<div class="a" style="left:67px;top:519px;width:20px;height:8px;background:#383828;"></div>
<div class="a" style="left:67px;top:527px;width:20px;height:9px;background:#303020;"></div>
<div class="a" style="left:67px;top:536px;width:20px;height:8px;background:#282820;"></div>
<div class="a" style="left:67px;top:544px;width:20px;height:8px;background:#202418;"></div>
<div class="a" style="left:67px;top:552px;width:20px;height:8px;background:#201c10;"></div>
<div class="a" style="left:67px;top:560px;width:20px;height:8px;background:#181c10;"></div>
<div class="a" style="left:67px;top:568px;width:20px;height:9px;background:#101810;"></div>
<div class="a" style="left:87px;top:315px;width:19px;height:8px;background:#d0b478;"></div>
<div class="a" style="left:87px;top:323px;width:19px;height:8px;background:#c8ac70;"></div>
<div class="a" style="left:87px;top:331px;width:19px;height:8px;background:#c4a868;"></div>
<div class="a" style="left:87px;top:339px;width:19px;height:8px;background:#c0a460;"></div>
<div class="a" style="left:87px;top:347px;width:19px;height:8px;background:#b8a058;"></div>
<div class="a" style="left:87px;top:355px;width:19px;height:9px;background:#b09850;"></div>
<div class="a" style="left:87px;top:364px;width:19px;height:8px;background:#a89048;"></div>
<div class="a" style="left:87px;top:372px;width:19px;height:8px;background:#a08848;"></div>
<div class="a" style="left:87px;top:380px;width:19px;height:8px;background:#988048;"></div>
<div class="a" style="left:87px;top:388px;width:19px;height:8px;background:#907848;"></div>
<div class="a" style="left:87px;top:396px;width:19px;height:9px;background:#887040;"></div>
<div class="a" style="left:87px;top:405px;width:19px;height:8px;background:#806c40;"></div>
<div class="a" style="left:87px;top:413px;width:19px;height:8px;background:#786840;"></div>
<div class="a" style="left:87px;top:421px;width:19px;height:8px;background:#706440;"></div>
<div class="a" style="left:87px;top:429px;width:19px;height:8px;background:#686040;"></div>
<div class="a" style="left:87px;top:437px;width:19px;height:9px;background:#605c40;"></div>
<div class="a" style="left:87px;top:446px;width:19px;height:8px;background:#b08838;"></div>
<div class="a" style="left:87px;top:454px;width:19px;height:8px;background:#a88030;"></div>
<div class="a" style="left:87px;top:462px;width:19px;height:8px;background:#a07830;"></div>
<div class="a" style="left:87px;top:470px;width:19px;height:8px;background:#987030;"></div>
<div class="a" style="left:87px;top:478px;width:19px;height:8px;background:#906828;"></div>
<div class="a" style="left:87px;top:486px;width:19px;height:9px;background:#886828;"></div>
<div class="a" style="left:87px;top:495px;width:19px;height:8px;background:#806028;"></div>
<div class="a" style="left:87px;top:503px;width:19px;height:8px;background:#786028;"></div>
<div class="a" style="left:87px;top:511px;width:19px;height:8px;background:#705828;"></div>
<div class="a" style="left:87px;top:519px;width:19px;height:8px;background:#685020;"></div>
<div class="a" style="left:87px;top:527px;width:19px;height:9px;background:#605028;"></div>
<div class="a" style="left:87px;top:536px;width:19px;height:8px;background:#585028;"></div>
<div class="a" style="left:87px;top:544px;width:19px;height:8px;background:#505028;"></div>
<div class="a" style="left:87px;top:552px;width:19px;height:8px;background:#504828;"></div>
<div class="a" style="left:87px;top:560px;width:19px;height:8px;background:#484020;"></div>
<div class="a" style="left:87px;top:568px;width:19px;height:9px;background:#404020;"></div>
<div class="a" style="left:106px;top:315px;width:20px;height:8px;background:#403020;"></div>
<div class="a" style="left:106px;top:323px;width:20px;height:8px;background:#382818;"></div>
<div class="a" style="left:106px;top:331px;width:20px;height:8px;background:#302418;"></div>
<div class="a" style="left:106px;top:339px;width:20px;height:8px;background:#282010;"></div>
<div class="a" style="left:106px;top:347px;width:20px;height:8px;background:#201c10;"></div>
<div class="a" style="left:106px;top:355px;width:20px;height:9px;background:#1c1810;"></div>
<div class="a" style="left:106px;top:364px;width:20px;height:8px;background:#181408;"></div>
<div class="a" style="left:106px;top:372px;width:20px;height:8px;background:#141008;"></div>
<div class="a" style="left:106px;top:380px;width:20px;height:8px;background:#78b068;"></div>
<div class="a" style="left:106px;top:388px;width:20px;height:8px;background:#68a858;"></div>
<div class="a" style="left:106px;top:396px;width:20px;height:9px;background:#58a048;"></div>
<div class="a" style="left:106px;top:405px;width:20px;height:8px;background:#489038;"></div>
<div class="a" style="left:106px;top:413px;width:20px;height:8px;background:#388030;"></div>
<div class="a" style="left:106px;top:421px;width:20px;height:8px;background:#307828;"></div>
<div class="a" style="left:106px;top:429px;width:20px;height:8px;background:#287020;"></div>
<div class="a" style="left:106px;top:437px;width:20px;height:9px;background:#206818;"></div>
<div class="a" style="left:106px;top:446px;width:20px;height:8px;background:#f8e870;"></div>
<div class="a" style="left:106px;top:454px;width:20px;height:8px;background:#f8e068;"></div>
<div class="a" style="left:106px;top:462px;width:20px;height:8px;background:#f8d868;"></div>
<div class="a" style="left:106px;top:470px;width:20px;height:8px;background:#f8d060;"></div>
<div class="a" style="left:106px;top:478px;width:20px;height:8px;background:#f8c860;"></div>
<div class="a" style="left:106px;top:486px;width:20px;height:9px;background:#f8c058;"></div>
<div class="a" style="left:106px;top:495px;width:20px;height:8px;background:#f0b850;"></div>
<div class="a" style="left:106px;top:503px;width:20px;height:8px;background:#f0b050;"></div>
<div class="a" style="left:106px;top:511px;width:20px;height:8px;background:#e8a040;"></div>
<div class="a" style="left:106px;top:519px;width:20px;height:8px;background:#e09030;"></div>
<div class="a" style="left:106px;top:527px;width:20px;height:9px;background:#d88020;"></div>
<div class="a" style="left:106px;top:536px;width:20px;height:8px;background:#d07010;"></div>
<div class="a" style="left:106px;top:544px;width:20px;height:8px;background:#c86010;"></div>
<div class="a" style="left:106px;top:552px;width:20px;height:8px;background:#b85010;"></div>
<div class="a" style="left:106px;top:560px;width:20px;height:8px;background:#a84008;"></div>
<div class="a" style="left:106px;top:568px;width:20px;height:9px;background:#982000;"></div>
<div class="a" style="left:126px;top:315px;width:20px;height:8px;background:#b0b0f8;"></div>
<div class="a" style="left:126px;top:323px;width:20px;height:8px;background:#9898e8;"></div>
<div class="a" style="left:126px;top:331px;width:20px;height:8px;background:#8080d0;"></div>
<div class="a" style="left:126px;top:339px;width:20px;height:8px;background:#7070c0;"></div>
<div class="a" style="left:126px;top:347px;width:20px;height:8px;background:#5858a8;"></div>
<div class="a" style="left:126px;top:355px;width:20px;height:9px;background:#484890;"></div>
<div class="a" style="left:126px;top:364px;width:20px;height:8px;background:#383878;"></div>
<div class="a" style="left:126px;top:372px;width:20px;height:8px;background:#282860;"></div>
<div class="a" style="left:126px;top:380px;width:20px;height:8px;background:#f80000;"></div>
<div class="a" style="left:126px;top:388px;width:20px;height:8px;background:#d80000;"></div>
<div class="a" style="left:126px;top:396px;width:20px;height:9px;background:#b00000;"></div>
<div class="a" style="left:126px;top:405px;width:20px;height:8px;background:#880000;"></div>
<div class="a" style="left:126px;top:413px;width:20px;height:8px;background:#f800f8;"></div>
<div class="a" style="left:126px;top:421px;width:20px;height:8px;background:#f800f8;"></div>
<div class="a" style="left:126px;top:429px;width:20px;height:8px;background:#f800f8;"></div>
<div class="a" style="left:126px;top:437px;width:20px;height:9px;background:#f800f8;"></div>
<div class="a" style="left:126px;top:446px;width:20px;height:8px;background:#a07850;"></div>
<div class="a" style="left:126px;top:454px;width:20px;height:8px;background:#987048;"></div>
<div class="a" style="left:126px;top:462px;width:20px;height:8px;background:#906840;"></div>
<div class="a" style="left:126px;top:470px;width:20px;height:8px;background:#886040;"></div>
<div class="a" style="left:126px;top:478px;width:20px;height:8px;background:#805838;"></div>
<div class="a" style="left:126px;top:486px;width:20px;height:9px;background:#785838;"></div>
<div class="a" style="left:126px;top:495px;width:20px;height:8px;background:#705030;"></div>
<div class="a" style="left:126px;top:503px;width:20px;height:8px;background:#685030;"></div>
<div class="a" style="left:126px;top:511px;width:20px;height:8px;background:#604830;"></div>
<div class="a" style="left:126px;top:519px;width:20px;height:8px;background:#584028;"></div>
<div class="a" style="left:126px;top:527px;width:20px;height:9px;background:#504028;"></div>
<div class="a" style="left:126px;top:536px;width:20px;height:8px;background:#483828;"></div>
<div class="a" style="left:126px;top:544px;width:20px;height:8px;background:#403020;"></div>
<div class="a" style="left:126px;top:552px;width:20px;height:8px;background:#383020;"></div>
<div class="a" style="left:126px;top:560px;width:20px;height:8px;background:#302818;"></div>
<div class="a" style="left:126px;top:568px;width:20px;height:9px;background:#282818;"></div>
<div class="a" style="left:146px;top:315px;width:20px;height:8px;background:#c09060;"></div>
<div class="a" style="left:146px;top:323px;width:20px;height:8px;background:#b88c60;"></div>
<div class="a" style="left:146px;top:331px;width:20px;height:8px;background:#b48858;"></div>
<div class="a" style="left:146px;top:339px;width:20px;height:8px;background:#b08458;"></div>
<div class="a" style="left:146px;top:347px;width:20px;height:8px;background:#ac8050;"></div>
<div class="a" style="left:146px;top:355px;width:20px;height:9px;background:#a87c50;"></div>
<div class="a" style="left:146px;top:364px;width:20px;height:8px;background:#a47850;"></div>
<div class="a" style="left:146px;top:372px;width:20px;height:8px;background:#a07448;"></div>
<div class="a" style="left:146px;top:380px;width:20px;height:8px;background:#9c7048;"></div>
<div class="a" style="left:146px;top:388px;width:20px;height:8px;background:#986c48;"></div>
<div class="a" style="left:146px;top:396px;width:20px;height:9px;background:#946840;"></div>
<div class="a" style="left:146px;top:405px;width:20px;height:8px;background:#906440;"></div>
<div class="a" style="left:146px;top:413px;width:20px;height:8px;background:#8c6040;"></div>
<div class="a" style="left:146px;top:421px;width:20px;height:8px;background:#885c38;"></div>
<div class="a" style="left:146px;top:429px;width:20px;height:8px;background:#845838;"></div>
<div class="a" style="left:146px;top:437px;width:20px;height:9px;background:#805838;"></div>
<div class="a" style="left:146px;top:446px;width:20px;height:8px;background:#f8f8f8;"></div>
<div class="a" style="left:146px;top:454px;width:20px;height:8px;background:#c8c8c8;"></div>
<div class="a" style="left:146px;top:462px;width:20px;height:8px;background:#a8a8a8;"></div>
<div class="a" style="left:146px;top:470px;width:20px;height:8px;background:#888888;"></div>
<div class="a" style="left:146px;top:478px;width:20px;height:8px;background:#686870;"></div>
<div class="a" style="left:146px;top:486px;width:20px;height:9px;background:#00c000;"></div>
<div class="a" style="left:146px;top:495px;width:20px;height:8px;background:#f8f800;"></div>
<div class="a" style="left:146px;top:503px;width:20px;height:8px;background:#f8b800;"></div>
<div class="a" style="left:146px;top:511px;width:20px;height:8px;background:#f88000;"></div>
<div class="a" style="left:146px;top:519px;width:20px;height:8px;background:#f80000;"></div>
<div class="a" style="left:146px;top:527px;width:20px;height:9px;background:#c80000;"></div>
<div class="a" style="left:146px;top:536px;width:20px;height:8px;background:#d0d0f8;"></div>
<div class="a" style="left:146px;top:544px;width:20px;height:8px;background:#a0a0f8;"></div>
<div class="a" style="left:146px;top:552px;width:20px;height:8px;background:#6868f8;"></div>
<div class="a" style="left:146px;top:560px;width:20px;height:8px;background:#0000f8;"></div>
<div class="a" style="left:146px;top:568px;width:20px;height:9px;background:#f8f8f8;"></div>
<svg class="a" style="left:87px;top:429px" width="19" height="9"><path d="M0.5 0.8h18.5M1 0.8L15.5 8.5M18.5 0.8L3.5 8.5M0.5 0.5v3" stroke="#7030d0" stroke-width="1.3" fill="none"/></svg>
<div class="a" style="left:9px;top:578px;width:34px;height:18px;background:#fff;"></div>
<div class="a" style="left:9px;top:578px;width:33px;height:17px;background:#808080;"></div>
<div class="a" style="left:10px;top:579px;width:32px;height:16px;background:#625a44;"></div>
<div class="t" style="left:48px;top:578px;font-size:12px;font-weight:400;color:#000;transform:scaleX(0.8889);transform-origin:0 0;">142 (0x08E)</div>
<div class="a" style="left:167px;top:66px;width:200px;height:200px;background:#000;"></div>
<svg class="a" style="left:167px;top:66px" width="200" height="200" shape-rendering="crispEdges"><path d="M24 26h158v2h-158zM40 18h126v2h-126zM34 20h138v2h-138zM28 22h150v2h-150zM24 24h158v2h-158zM52 16h102v2h-102zM52 36h102v2h-102zM74 38h58v2h-58zM28 30h150v2h-150zM40 34h126v2h-126zM74 14h58v2h-58zM34 32h138v2h-138zM24 28h158v2h-158z" fill="#635b43"/><path d="M46 176h30v2h-30zM42 170h38v2h-38zM44 174h34v2h-34zM42 160h38v2h-38zM52 148h18v2h-18zM42 162h38v2h-38zM44 154h34v2h-34zM42 158h38v2h-38zM46 152h30v2h-30zM42 166h38v2h-38zM48 178h26v2h-26zM42 164h38v2h-38zM42 168h38v2h-38zM44 156h34v2h-34zM44 172h34v2h-34zM48 150h26v2h-26zM52 180h18v2h-18z" fill="#7a4a38"/><path d="M40 112h6v2h-6zM116 112h6v2h-6zM20 86h2v2h-2zM140 86h2v2h-2zM66 48h30v2h-30zM38 110h2v2h-2zM122 110h2v2h-2zM30 104h2v2h-2zM130 104h2v2h-2zM24 96h2v2h-2zM136 96h2v2h-2zM46 114h4v2h-4zM112 114h4v2h-4zM34 60h4v2h-4zM124 60h4v2h-4zM26 68h2v2h-2zM134 68h2v2h-2zM40 56h6v2h-6zM116 56h6v2h-6zM56 50h10v2h-10zM96 50h10v2h-10zM56 118h10v2h-10zM96 118h10v2h-10zM66 120h30v2h-30zM20 78h2v2h-2zM140 78h2v2h-2zM30 64h2v2h-2zM130 64h2v2h-2zM32 62h2v2h-2zM128 62h2v2h-2zM20 90h2v2h-2zM140 90h2v2h-2zM46 54h4v2h-4zM112 54h4v2h-4zM24 72h2v2h-2zM136 72h2v2h-2zM34 108h4v2h-4zM124 108h4v2h-4zM28 66h2v2h-2zM132 66h2v2h-2zM38 58h2v2h-2zM122 58h2v2h-2zM20 82h2v2h-2zM140 82h2v2h-2zM28 102h2v2h-2zM132 102h2v2h-2zM22 74h2v2h-2zM138 74h2v2h-2zM22 92h2v2h-2zM138 92h2v2h-2zM50 52h6v2h-6zM106 52h6v2h-6zM20 80h2v2h-2zM140 80h2v2h-2zM24 98h2v2h-2zM136 98h2v2h-2zM50 116h6v2h-6zM106 116h6v2h-6zM20 84h2v2h-2zM140 84h2v2h-2zM20 88h2v2h-2zM140 88h2v2h-2zM24 70h2v2h-2zM136 70h2v2h-2zM32 106h2v2h-2zM128 106h2v2h-2zM22 76h2v2h-2zM138 76h2v2h-2zM22 94h2v2h-2zM138 94h2v2h-2zM26 100h2v2h-2zM134 100h2v2h-2z" fill="#e81818"/><path d="M82 98h2v2h-2zM178 98h2v2h-2zM86 92h2v2h-2zM174 92h2v2h-2zM84 96h2v2h-2zM176 96h2v2h-2zM88 90h2v2h-2zM172 90h2v2h-2zM78 124h2v2h-2zM182 124h2v2h-2zM98 78h4v2h-4zM160 78h4v2h-4zM114 70h6v2h-6zM142 70h6v2h-6zM108 172h6v2h-6zM148 172h6v2h-6zM120 68h22v2h-22zM84 150h2v2h-2zM176 150h2v2h-2zM78 120h2v2h-2zM182 120h2v2h-2zM86 152h2v2h-2zM174 152h2v2h-2zM80 136h2v2h-2zM180 136h2v2h-2zM78 110h2v2h-2zM182 110h2v2h-2zM108 72h6v2h-6zM148 72h6v2h-6zM82 102h2v2h-2zM178 102h2v2h-2zM78 128h2v2h-2zM182 128h2v2h-2zM84 94h2v2h-2zM176 94h2v2h-2zM96 80h2v2h-2zM164 80h2v2h-2zM80 106h2v2h-2zM180 106h2v2h-2zM104 74h4v2h-4zM154 74h4v2h-4zM120 176h22v2h-22zM80 104h2v2h-2zM180 104h2v2h-2zM82 144h2v2h-2zM178 144h2v2h-2zM88 154h2v2h-2zM172 154h2v2h-2zM80 140h2v2h-2zM180 140h2v2h-2zM78 114h2v2h-2zM182 114h2v2h-2zM78 132h2v2h-2zM182 132h2v2h-2zM104 170h4v2h-4zM154 170h4v2h-4zM80 108h2v2h-2zM180 108h2v2h-2zM102 168h2v2h-2zM158 168h2v2h-2zM94 82h2v2h-2zM166 82h2v2h-2zM90 86h2v2h-2zM170 86h2v2h-2zM78 118h2v2h-2zM182 118h2v2h-2zM114 174h6v2h-6zM142 174h6v2h-6zM98 166h4v2h-4zM160 166h4v2h-4zM90 158h2v2h-2zM170 158h2v2h-2zM88 88h2v2h-2zM172 88h2v2h-2zM80 138h2v2h-2zM180 138h2v2h-2zM78 122h2v2h-2zM182 122h2v2h-2zM84 148h2v2h-2zM176 148h2v2h-2zM78 126h2v2h-2zM182 126h2v2h-2zM92 84h2v2h-2zM168 84h2v2h-2zM82 142h2v2h-2zM178 142h2v2h-2zM102 76h2v2h-2zM158 76h2v2h-2zM78 112h2v2h-2zM182 112h2v2h-2zM78 130h2v2h-2zM182 130h2v2h-2zM88 156h2v2h-2zM172 156h2v2h-2zM82 146h2v2h-2zM178 146h2v2h-2zM78 116h2v2h-2zM182 116h2v2h-2zM78 134h2v2h-2zM182 134h2v2h-2zM96 164h2v2h-2zM164 164h2v2h-2zM82 100h2v2h-2zM178 100h2v2h-2zM94 162h2v2h-2zM166 162h2v2h-2zM92 160h2v2h-2zM168 160h2v2h-2z" fill="#e81818"/></svg>
<div class="a" style="left:6px;top:601px;width:100px;height:17px;background:#fff;"></div>
<div class="a" style="left:6px;top:601px;width:99px;height:16px;background:#808080;"></div>
<div class="a" style="left:7px;top:602px;width:98px;height:15px;background:#c0c0c0;"></div>
<div class="a" style="left:108px;top:601px;width:198px;height:17px;background:#fff;"></div>
<div class="a" style="left:108px;top:601px;width:197px;height:16px;background:#808080;"></div>
<div class="a" style="left:109px;top:602px;width:196px;height:15px;background:#c0c0c0;"></div>
<div class="t" style="left:110px;top:602px;font-size:12px;font-weight:400;color:#000;transform:scaleX(0.9062);transform-origin:0 0;">SHP Type: Cameo</div>
<div class="a" style="left:308px;top:601px;width:98px;height:17px;background:#fff;"></div>
<div class="a" style="left:308px;top:601px;width:97px;height:16px;background:#808080;"></div>
<div class="a" style="left:309px;top:602px;width:96px;height:15px;background:#c0c0c0;"></div>
<div class="t" style="left:309px;top:602px;font-size:12px;font-weight:400;color:#000;transform:scaleX(0.9464);transform-origin:0 0;">X: 97 Y: 32</div>
<div class="a" style="left:408px;top:601px;width:148px;height:17px;background:#fff;"></div>
<div class="a" style="left:408px;top:601px;width:147px;height:16px;background:#808080;"></div>
<div class="a" style="left:409px;top:602px;width:146px;height:15px;background:#c0c0c0;"></div>
<div class="t" style="left:411px;top:602px;font-size:12px;font-weight:400;color:#000;transform:scaleX(0.9008);transform-origin:0 0;">Width: 100 Height: 100</div>
<div class="a" style="left:558px;top:601px;width:168px;height:17px;background:#fff;"></div>
<div class="a" style="left:558px;top:601px;width:167px;height:16px;background:#808080;"></div>
<div class="a" style="left:559px;top:602px;width:166px;height:15px;background:#c0c0c0;"></div>
<div class="t" style="left:560px;top:602px;font-size:12px;font-weight:400;color:#000;transform:scaleX(0.8806);transform-origin:0 0;">Shadows Off</div>
<svg class="a" style="left:712px;top:604px" width="14" height="14" shape-rendering="crispEdges"><g fill="none" stroke-width="1"><path d="M13 1L1 13" stroke="#fff"/><path d="M13 2L2 13M13 3L3 13" stroke="#808080"/><path d="M13 5L5 13" stroke="#fff"/><path d="M13 6L6 13M13 7L7 13" stroke="#808080"/><path d="M13 9L9 13" stroke="#fff"/><path d="M13 10L10 13M13 11L11 13" stroke="#808080"/></g></svg>
</body></html>
